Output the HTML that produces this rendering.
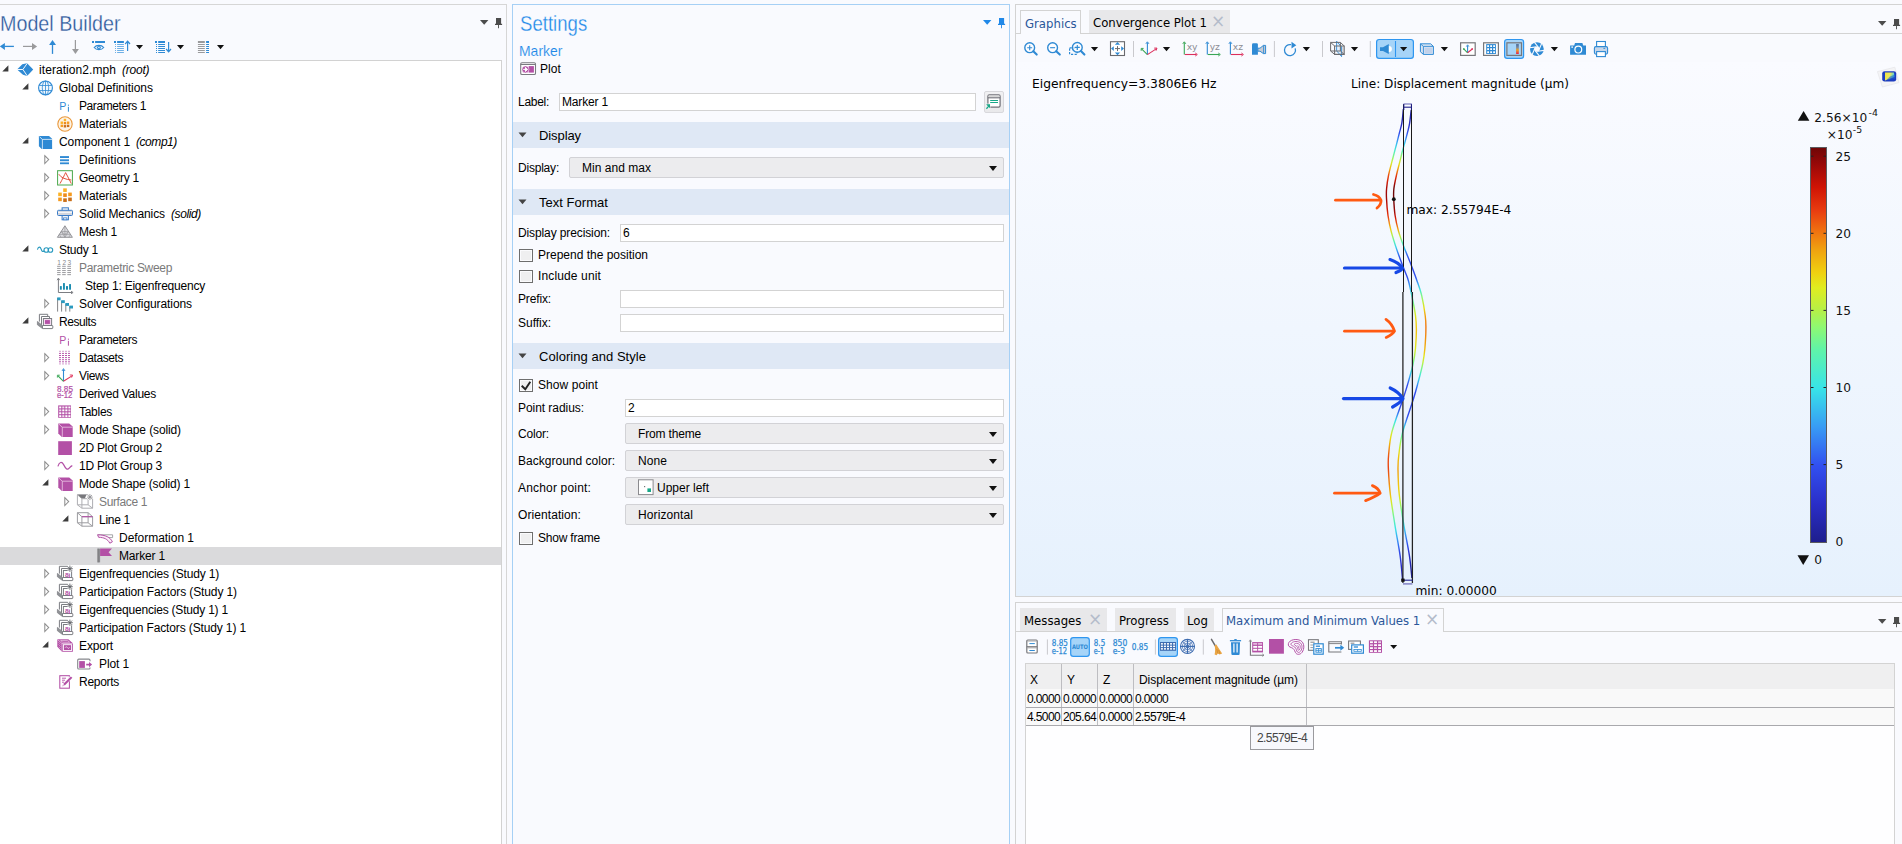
<!DOCTYPE html><html><head><meta charset="utf-8"><title>COMSOL</title><style>
html,body{margin:0;padding:0}
body{width:1902px;height:844px;overflow:hidden;background:#f9fafe;position:relative;font-family:"Liberation Sans",sans-serif;font-size:12px;color:#000}
.a{position:absolute;box-sizing:border-box}
svg.a{overflow:visible}
.t{position:absolute;white-space:pre;line-height:18px;height:18px}
.d{position:absolute;white-space:pre;font-family:"DejaVu Sans",sans-serif;line-height:16px}
.dc{position:absolute;white-space:pre;font-family:"DejaVu Sans Condensed","DejaVu Sans",sans-serif;font-size:13px;line-height:18px}
.ttl{position:absolute;white-space:pre;font-size:22.4px;line-height:24px;transform-origin:0 0;-webkit-text-stroke:0.3px #f9fafe}
.inp{position:absolute;box-sizing:border-box;background:#fff;border:1px solid #d3d3d3;line-height:16px;padding-left:2px;white-space:pre}
.cmb{position:absolute;box-sizing:border-box;background:#ececee;border:1px solid #d2d2d6;border-radius:2px;line-height:20px;white-space:pre}
.cmb:after{content:"";position:absolute;right:6px;top:8px;border-left:4px solid transparent;border-right:4px solid transparent;border-top:5px solid #111}
.sec{position:absolute;box-sizing:border-box;background:#dfe8f5;left:513px;width:496px;height:26px}
.chk{position:absolute;box-sizing:border-box;width:14px;height:13px;border:1px solid #6e6e6e;background:#efeff0;box-shadow:inset 0 0 0 1px #fbfbfd}
.sep{position:absolute;width:1px;background:#c8c8cc}
</style></head><body>
<div class="a " style="left:-1px;top:4px;width:508px;height:845px;border:1px solid #d6d6d6;border-left:none;border-bottom:none"></div>
<div class="ttl" style="left:0.2px;top:12px;color:#2b579a;transform:scaleX(0.8806)">Model Builder</div>
<svg class="a" style="left:479.8px;top:19.6px" width="9" height="6" viewBox="0 0 9 6"><path d="M0 0H8.4L4.2 4.8Z" fill="#4c4c4c"/></svg>
<svg class="a" style="left:495px;top:17.7px" width="8" height="11" viewBox="0 0 8 11"><path d="M1 0H6.1V5.7H7.1V7H4V10.3H3.1V7H0V5.7H1Z" fill="#4c4c4c"/></svg>
<svg class="a" style="left:0;top:34px" width="240" height="26" viewBox="0 34 240 26"><path d="M-0.3 46.4L4.9 43V49.9Z" fill="#2f8ad4"/><path d="M4.5 46.4H13.9" stroke="#2f8ad4" stroke-width="1.3"/><path d="M37.1 46.4L32 43V49.9Z" fill="#9a9a9c"/><path d="M23 46.4H32.5" stroke="#9a9a9c" stroke-width="1.2"/><path d="M52.5 39.9L49.1 45H56Z" fill="#2f8ad4"/><path d="M52.5 44.5V53.9" stroke="#2f8ad4" stroke-width="1.3"/><path d="M75.4 54L72 49H78.9Z" fill="#9a9a9c"/><path d="M75.4 40V49.5" stroke="#9a9a9c" stroke-width="1.2"/><rect x="92" y="41" width="2" height="2" fill="#2f8ad4"/><rect x="95.1" y="41" width="9.9" height="2" fill="#2f8ad4"/><path d="M94.2 47.5C96.4 44.6 101.4 44.6 103.7 47.5C101.4 50.4 96.4 50.4 94.2 47.5Z" fill="none" stroke="#2f8ad4" stroke-width="1.2"/><ellipse cx="98.9" cy="47.5" rx="2" ry="1.5" fill="#2f8ad4"/><rect x="98.2" y="47" width="1.4" height="0.9" fill="#fff"/><rect x="114" y="41" width="2" height="2" fill="#2f8ad4"/><rect x="117.1" y="41" width="6.8" height="2" fill="#2f8ad4"/><rect x="115" y="44.0" width="1" height="1" fill="#6fb0e6"/><rect x="117.1" y="44.0" width="6.8" height="1" fill="#6fb0e6"/><rect x="115" y="46.0" width="1" height="1" fill="#6fb0e6"/><rect x="117.1" y="46.0" width="6.8" height="1" fill="#6fb0e6"/><rect x="115" y="48.0" width="1" height="1" fill="#6fb0e6"/><rect x="117.1" y="48.0" width="6.8" height="1" fill="#6fb0e6"/><rect x="115" y="50.0" width="1" height="1" fill="#6fb0e6"/><rect x="117.1" y="50.0" width="6.8" height="1" fill="#6fb0e6"/><rect x="115" y="52.0" width="1" height="1" fill="#6fb0e6"/><rect x="117.1" y="52.0" width="6.8" height="1" fill="#6fb0e6"/><path d="M127.6 41.5V51M125.2 44L127.6 41.2L130 44" fill="none" stroke="#2f8ad4" stroke-width="1.2"/><path d="M136 45H143L139.5 49.2Z" fill="#111"/><rect x="155" y="41" width="2" height="2" fill="#2f8ad4"/><rect x="158.2" y="41" width="6.8" height="2" fill="#2f8ad4"/><rect x="156" y="44.0" width="1" height="1" fill="#2f8ad4"/><rect x="158.2" y="44.0" width="6.8" height="1" fill="#2f8ad4"/><rect x="156" y="46.0" width="1" height="1" fill="#2f8ad4"/><rect x="158.2" y="46.0" width="6.8" height="1" fill="#2f8ad4"/><rect x="156" y="48.0" width="1" height="1" fill="#2f8ad4"/><rect x="158.2" y="48.0" width="6.8" height="1" fill="#2f8ad4"/><rect x="156" y="50.0" width="1" height="1" fill="#2f8ad4"/><rect x="158.2" y="50.0" width="6.8" height="1" fill="#2f8ad4"/><rect x="156" y="52.0" width="1" height="1" fill="#2f8ad4"/><rect x="158.2" y="52.0" width="6.8" height="1" fill="#2f8ad4"/><path d="M168.6 42.1V51.4M166.2 49L168.6 51.8L171 49" fill="none" stroke="#2f8ad4" stroke-width="1.2"/><path d="M177 45H184L180.5 49.2Z" fill="#111"/><rect x="197.9" y="41" width="6.9" height="2" fill="#9a9a9c"/><rect x="206.1" y="41" width="2.9" height="2" fill="#2f8ad4"/><rect x="197.9" y="44.0" width="6.9" height="1" fill="#9a9a9c"/><rect x="206.1" y="44.0" width="2.9" height="1" fill="#2f8ad4"/><rect x="197.9" y="46.0" width="6.9" height="1" fill="#9a9a9c"/><rect x="206.1" y="46.0" width="2.9" height="1" fill="#2f8ad4"/><rect x="197.9" y="48.0" width="6.9" height="1" fill="#9a9a9c"/><rect x="206.1" y="48.0" width="2.9" height="1" fill="#2f8ad4"/><rect x="197.9" y="50.0" width="6.9" height="1" fill="#9a9a9c"/><rect x="206.1" y="50.0" width="2.9" height="1" fill="#2f8ad4"/><rect x="197.9" y="52.0" width="6.9" height="1" fill="#9a9a9c"/><rect x="206.1" y="52.0" width="2.9" height="1" fill="#2f8ad4"/><path d="M217 45H224L220.5 49.2Z" fill="#111"/></svg>
<div class="a " style="left:-1px;top:60px;width:503px;height:800px;background:#fff;border:1px solid #d2d2d2"></div>
<svg class="a" style="left:2.1px;top:65px" width="7" height="7" viewBox="0 0 7 7"><path d="M6.4 0.3V6.4H0.3Z" fill="#3c3c3c"/></svg>
<svg class="a" style="left:17px;top:61px" width="16" height="16" viewBox="0 0 16 16"><path d="M0.1 8.5L5.3 3.2L10.1 2.3L16.2 8.5L10.1 14.9L6 13.7Z" fill="#2f8ad4"/><path d="M0.1 8.5H5.9L10.2 2.4M5.9 8.5L10.2 14.8" fill="none" stroke="#fff" stroke-width="0.95"/></svg>
<div class="t" style="left:39px;top:61px;"><span style="letter-spacing:0.068px">iteration2.mph</span><i style="letter-spacing:-0.228px;margin-left:6px">(root)</i></div>
<svg class="a" style="left:22.1px;top:83px" width="7" height="7" viewBox="0 0 7 7"><path d="M6.4 0.3V6.4H0.3Z" fill="#3c3c3c"/></svg>
<svg class="a" style="left:37px;top:79px" width="16" height="16" viewBox="0 0 16 16"><circle cx="8.5" cy="8.9" r="6.9" fill="#f3f8fd" stroke="#2f8ad4" stroke-width="1.15"/><ellipse cx="8.5" cy="8.9" rx="3.2" ry="6.9" fill="none" stroke="#2f8ad4" stroke-width="0.8"/><path d="M8.5 2V15.8M2.2 6.5H14.8M2.2 11.5H14.8" stroke="#2f8ad4" stroke-width="0.8" fill="none"/></svg>
<div class="t" style="left:59px;top:79px;"><span style="letter-spacing:-0.003px">Global Definitions</span></div>
<svg class="a" style="left:57px;top:97px" width="16" height="16" viewBox="0 0 16 16"><text x="2.2" y="12.6" font-family="Liberation Sans,sans-serif" font-size="10.6" fill="#2f8ad4">P</text><rect x="10.9" y="7.6" width="1" height="1.2" fill="#2f8ad4"/><rect x="10.9" y="9.8" width="1" height="4.9" fill="#2f8ad4"/></svg>
<div class="t" style="left:79px;top:97px;"><span style="letter-spacing:-0.419px">Parameters 1</span></div>
<svg class="a" style="left:57px;top:115px" width="16" height="16" viewBox="0 0 16 16"><circle cx="8" cy="9" r="7.2" fill="#fdf3e4" stroke="#e9983c" stroke-width="1.1"/><rect x="3.60" y="6.52" width="2.4" height="2.4" fill="#fbb225"/><rect x="3.60" y="9.67" width="2.4" height="2.4" fill="#f59a1e"/><rect x="6.75" y="3.78" width="2.4" height="2.4" fill="#fbb225"/><rect x="6.75" y="6.93" width="2.4" height="2.4" fill="#ee8c1c"/><rect x="6.75" y="10.08" width="2.4" height="2.4" fill="#c96f1a"/><rect x="9.90" y="6.52" width="2.4" height="2.4" fill="#f59a1e"/><rect x="9.90" y="9.67" width="2.4" height="2.4" fill="#c96f1a"/></svg>
<div class="t" style="left:79px;top:115px;"><span style="letter-spacing:-0.076px">Materials</span></div>
<svg class="a" style="left:22.1px;top:137px" width="7" height="7" viewBox="0 0 7 7"><path d="M6.4 0.3V6.4H0.3Z" fill="#3c3c3c"/></svg>
<svg class="a" style="left:37px;top:133px" width="16" height="16" viewBox="0 0 16 16"><path d="M1.9 3H12L15.1 5.7V16H4.7L1.9 13.2Z" fill="#2f8ad4"/><path d="M2.6 3.8L5.3 6.4H15M5.4 6.4V15.9" fill="none" stroke="#e4f0fa" stroke-width="0.85"/></svg>
<div class="t" style="left:59px;top:133px;"><span style="letter-spacing:-0.095px">Component 1</span><i style="letter-spacing:-0.451px;margin-left:6px">(comp1)</i></div>
<svg class="a" style="left:43px;top:154px" width="7" height="11" viewBox="0 0 7 11"><path d="M1.8 1.7L5.7 5.6L1.8 9.5Z" fill="none" stroke="#8e8e8e" stroke-width="1.05"/></svg>
<svg class="a" style="left:57px;top:151px" width="16" height="16" viewBox="0 0 16 16"><rect x="3" y="5.1" width="9" height="1.9" fill="#2f8ad4"/><rect x="3" y="8.3" width="9" height="1.9" fill="#2f8ad4"/><rect x="3" y="11.4" width="9" height="1.8" fill="#2f8ad4"/></svg>
<div class="t" style="left:79px;top:151px;"><span style="letter-spacing:0.088px">Definitions</span></div>
<svg class="a" style="left:43px;top:172px" width="7" height="11" viewBox="0 0 7 11"><path d="M1.8 1.7L5.7 5.6L1.8 9.5Z" fill="none" stroke="#8e8e8e" stroke-width="1.05"/></svg>
<svg class="a" style="left:57px;top:169px" width="16" height="16" viewBox="0 0 16 16"><rect x="0.6" y="1.7" width="14.8" height="14.3" fill="#fff" stroke="#4aa84c" stroke-width="1"/><path d="M1.8 5.2C4 9 9 10.5 14.3 11M3 14.6C5 11 7.5 6 8.6 3.6C10.5 7 12.5 11 14.3 14.6" fill="none" stroke="#e2523c" stroke-width="1"/></svg>
<div class="t" style="left:79px;top:169px;"><span style="letter-spacing:-0.269px">Geometry 1</span></div>
<svg class="a" style="left:43px;top:190px" width="7" height="11" viewBox="0 0 7 11"><path d="M1.8 1.7L5.7 5.6L1.8 9.5Z" fill="none" stroke="#8e8e8e" stroke-width="1.05"/></svg>
<svg class="a" style="left:57px;top:187px" width="16" height="16" viewBox="0 0 16 16"><rect x="1.20" y="5.58" width="3.6" height="3.6" fill="#fbb225"/><rect x="1.20" y="10.58" width="3.6" height="3.6" fill="#f59a1e"/><rect x="6.20" y="1.35" width="3.6" height="3.6" fill="#fbb225"/><rect x="6.20" y="6.35" width="3.6" height="3.6" fill="#ee8c1c"/><rect x="6.20" y="11.35" width="3.6" height="3.6" fill="#c96f1a"/><rect x="11.20" y="5.58" width="3.6" height="3.6" fill="#f59a1e"/><rect x="11.20" y="10.58" width="3.6" height="3.6" fill="#c96f1a"/></svg>
<div class="t" style="left:79px;top:187px;"><span style="letter-spacing:-0.076px">Materials</span></div>
<svg class="a" style="left:43px;top:208px" width="7" height="11" viewBox="0 0 7 11"><path d="M1.8 1.7L5.7 5.6L1.8 9.5Z" fill="none" stroke="#8e8e8e" stroke-width="1.05"/></svg>
<svg class="a" style="left:57px;top:205px" width="16" height="16" viewBox="0 0 16 16"><rect x="5.1" y="2.8" width="6.3" height="12" fill="#eef2f8" stroke="#3a7cc8" stroke-width="1"/><rect x="0.5" y="5.3" width="15" height="5.2" rx="1" fill="#d2d6de" stroke="#3a7cc8" stroke-width="1"/><path d="M1 7.4H15" stroke="#f4f5f8" stroke-width="1.2"/><rect x="6.6" y="12.9" width="3.3" height="1.9" fill="#fff" stroke="#3a7cc8" stroke-width="0.8"/></svg>
<div class="t" style="left:79px;top:205px;"><span style="letter-spacing:-0.092px">Solid Mechanics</span><i style="letter-spacing:-0.403px;margin-left:6px">(solid)</i></div>
<svg class="a" style="left:57px;top:223px" width="16" height="16" viewBox="0 0 16 16"><path d="M7.9 2.8L15.4 14.3H0.4Z" fill="#dcdce0" stroke="#8a8a8e" stroke-width="0.9"/><path d="M4.2 8.5H11.6L7.9 14.3ZM4.2 8.5L7.9 11.4L11.6 8.5M7.9 2.8V14.3M2.3 11.4H13.5M2.3 11.4L4 14.3M13.5 11.4L11.8 14.3" fill="none" stroke="#909094" stroke-width="0.6"/></svg>
<div class="t" style="left:79px;top:223px;"><span style="letter-spacing:-0.225px">Mesh 1</span></div>
<svg class="a" style="left:22.1px;top:245px" width="7" height="7" viewBox="0 0 7 7"><path d="M6.4 0.3V6.4H0.3Z" fill="#3c3c3c"/></svg>
<svg class="a" style="left:37px;top:241px" width="16" height="16" viewBox="0 0 16 16"><path d="M0.4 8.6C1.4 5.4 3.2 5.4 4.2 8.2C5 10.6 6 11.2 7 9.6" fill="none" stroke="#2a9abf" stroke-width="1.1"/><circle cx="9.3" cy="9" r="2.3" fill="none" stroke="#2a9abf" stroke-width="1.1"/><circle cx="13.4" cy="9" r="2.3" fill="none" stroke="#2a9abf" stroke-width="1.1"/></svg>
<div class="t" style="left:59px;top:241px;"><span style="letter-spacing:-0.242px">Study 1</span></div>
<svg class="a" style="left:57px;top:259px" width="16" height="16" viewBox="0 0 16 16"><text x="0.3" y="5.8" font-family="Liberation Sans,sans-serif" font-size="6.5" fill="#86868a" letter-spacing="1.5">123</text><rect x="0.1" y="6.8" width="3.5" height="1.05" fill="#a0a0a4"/><rect x="0.1" y="8.9" width="3.5" height="1.05" fill="#a0a0a4"/><rect x="0.1" y="11" width="3.5" height="1.05" fill="#a0a0a4"/><rect x="0.1" y="13" width="3.5" height="1.05" fill="#a0a0a4"/><rect x="0.1" y="15.1" width="3.5" height="1.05" fill="#a0a0a4"/><rect x="5.15" y="6.8" width="3.6" height="1.05" fill="#a0a0a4"/><rect x="5.15" y="8.9" width="3.6" height="1.05" fill="#a0a0a4"/><rect x="5.15" y="11" width="3.6" height="1.05" fill="#a0a0a4"/><rect x="5.15" y="13" width="3.6" height="1.05" fill="#a0a0a4"/><rect x="5.15" y="15.1" width="3.6" height="1.05" fill="#a0a0a4"/><rect x="10.3" y="6.8" width="3.7" height="1.05" fill="#a0a0a4"/><rect x="10.3" y="8.9" width="3.7" height="1.05" fill="#a0a0a4"/><rect x="10.3" y="11" width="3.7" height="1.05" fill="#a0a0a4"/><rect x="10.3" y="13" width="3.7" height="1.05" fill="#a0a0a4"/><rect x="10.3" y="15.1" width="3.7" height="1.05" fill="#a0a0a4"/></svg>
<div class="t" style="left:79px;top:259px;color:#7a7a7a;"><span style="letter-spacing:-0.315px">Parametric Sweep</span></div>
<svg class="a" style="left:57px;top:277px" width="16" height="16" viewBox="0 0 16 16"><path d="M1.4 1.8V15.5H15.4" fill="none" stroke="#7b7d82" stroke-width="1"/><path d="M0.1 3.2L1.4 1.1L2.7 3.2M14 14.2L16.1 15.5L14 16.8" fill="none" stroke="#7b7d82" stroke-width="0.9"/><rect x="2.9" y="9.1" width="1.9" height="3.6" fill="#1a8cb0"/><rect x="6" y="6.1" width="1.9" height="6.6" fill="#1a8cb0"/><rect x="9" y="9.1" width="2" height="3.6" fill="#1a8cb0"/><rect x="12.1" y="7.1" width="1.9" height="5.6" fill="#1a8cb0"/></svg>
<div class="t" style="left:85px;top:277px;"><span style="letter-spacing:-0.216px">Step 1: Eigenfrequency</span></div>
<svg class="a" style="left:43px;top:298px" width="7" height="11" viewBox="0 0 7 11"><path d="M1.8 1.7L5.7 5.6L1.8 9.5Z" fill="none" stroke="#8e8e8e" stroke-width="1.05"/></svg>
<svg class="a" style="left:57px;top:295px" width="16" height="16" viewBox="0 0 16 16"><path d="M0.6 3V16.6M4.6 6V16.6M8.8 8.8V16.6M12.8 11.2V16.6" stroke="#77777b" stroke-width="0.9" fill="none"/><rect x="0.2" y="2.4" width="3.4" height="2.9" fill="#2a9abf"/><rect x="4.2" y="5.2" width="3.6" height="2.9" fill="#2a9abf"/><rect x="8.4" y="8" width="3.6" height="2.9" fill="#2a9abf"/><rect x="12.4" y="10.6" width="3.6" height="2.9" fill="#2a9abf"/></svg>
<div class="t" style="left:79px;top:295px;"><span style="letter-spacing:-0.082px">Solver Configurations</span></div>
<svg class="a" style="left:22.1px;top:317px" width="7" height="7" viewBox="0 0 7 7"><path d="M6.4 0.3V6.4H0.3Z" fill="#3c3c3c"/></svg>
<svg class="a" style="left:37px;top:313px" width="16" height="16" viewBox="0 0 16 16"><path d="M2.4 8.6V1.3H10.7V3.3" fill="#fff" stroke="#7b7d82" stroke-width="1"/><path d="M4.5 11.8V3.5H12.5V5.4" fill="#fff" stroke="#7b7d82" stroke-width="1"/><path d="M0.4 8.4L5.5 12.5V15.6L0.4 11.8Z" fill="#909296" stroke="#7b7d82" stroke-width="0.7"/><rect x="5.5" y="12.5" width="10.3" height="3.1" rx="0.6" fill="#fff" stroke="#7b7d82" stroke-width="1"/><rect x="6.4" y="5.5" width="8.2" height="7" fill="#fff" stroke="#7b7d82" stroke-width="1"/><rect x="7.2" y="6.3" width="6.6" height="5.5" fill="#efcdea"/><rect x="8" y="7.1" width="4.9" height="3.8" fill="#b350a6"/></svg>
<div class="t" style="left:59px;top:313px;"><span style="letter-spacing:-0.431px">Results</span></div>
<svg class="a" style="left:57px;top:331px" width="16" height="16" viewBox="0 0 16 16"><text x="2.2" y="12.6" font-family="Liberation Sans,sans-serif" font-size="10.6" fill="#b350a6">P</text><rect x="10.9" y="7.6" width="1" height="1.2" fill="#b350a6"/><rect x="10.9" y="9.8" width="1" height="4.9" fill="#b350a6"/></svg>
<div class="t" style="left:79px;top:331px;"><span style="letter-spacing:-0.402px">Parameters</span></div>
<svg class="a" style="left:43px;top:352px" width="7" height="11" viewBox="0 0 7 11"><path d="M1.8 1.7L5.7 5.6L1.8 9.5Z" fill="none" stroke="#8e8e8e" stroke-width="1.05"/></svg>
<svg class="a" style="left:57px;top:349px" width="16" height="16" viewBox="0 0 16 16"><rect x="2.0" y="1.8" width="2" height="1" fill="#b350a6" opacity="0.55"/><rect x="2.0" y="3.9" width="2" height="1" fill="#b350a6" opacity="0.95"/><rect x="2.0" y="6.0" width="2" height="1" fill="#b350a6" opacity="0.95"/><rect x="2.0" y="8.1" width="2" height="1" fill="#b350a6" opacity="0.95"/><rect x="2.0" y="10.2" width="2" height="1" fill="#b350a6" opacity="0.95"/><rect x="2.0" y="12.3" width="2" height="1" fill="#b350a6" opacity="0.95"/><rect x="2.0" y="14.4" width="2" height="1" fill="#b350a6" opacity="0.55"/><rect x="5.0" y="1.8" width="2" height="1" fill="#b350a6" opacity="0.55"/><rect x="5.0" y="3.9" width="2" height="1" fill="#b350a6" opacity="0.95"/><rect x="5.0" y="6.0" width="2" height="1" fill="#b350a6" opacity="0.95"/><rect x="5.0" y="8.1" width="2" height="1" fill="#b350a6" opacity="0.95"/><rect x="5.0" y="10.2" width="2" height="1" fill="#b350a6" opacity="0.95"/><rect x="5.0" y="12.3" width="2" height="1" fill="#b350a6" opacity="0.95"/><rect x="5.0" y="14.4" width="2" height="1" fill="#b350a6" opacity="0.55"/><rect x="8.0" y="1.8" width="2" height="1" fill="#b350a6" opacity="0.55"/><rect x="8.0" y="3.9" width="2" height="1" fill="#b350a6" opacity="0.95"/><rect x="8.0" y="6.0" width="2" height="1" fill="#b350a6" opacity="0.95"/><rect x="8.0" y="8.1" width="2" height="1" fill="#b350a6" opacity="0.95"/><rect x="8.0" y="10.2" width="2" height="1" fill="#b350a6" opacity="0.95"/><rect x="8.0" y="12.3" width="2" height="1" fill="#b350a6" opacity="0.95"/><rect x="8.0" y="14.4" width="2" height="1" fill="#b350a6" opacity="0.55"/><rect x="11.0" y="1.8" width="2" height="1" fill="#b350a6" opacity="0.55"/><rect x="11.0" y="3.9" width="2" height="1" fill="#b350a6" opacity="0.95"/><rect x="11.0" y="6.0" width="2" height="1" fill="#b350a6" opacity="0.95"/><rect x="11.0" y="8.1" width="2" height="1" fill="#b350a6" opacity="0.95"/><rect x="11.0" y="10.2" width="2" height="1" fill="#b350a6" opacity="0.95"/><rect x="11.0" y="12.3" width="2" height="1" fill="#b350a6" opacity="0.95"/><rect x="11.0" y="14.4" width="2" height="1" fill="#b350a6" opacity="0.55"/></svg>
<div class="t" style="left:79px;top:349px;"><span style="letter-spacing:-0.419px">Datasets</span></div>
<svg class="a" style="left:43px;top:370px" width="7" height="11" viewBox="0 0 7 11"><path d="M1.8 1.7L5.7 5.6L1.8 9.5Z" fill="none" stroke="#8e8e8e" stroke-width="1.05"/></svg>
<svg class="a" style="left:57px;top:367px" width="16" height="16" viewBox="0 0 16 16"><path d="M6.5 14.3V2.4" stroke="#2f8ad4" stroke-width="1.1"/><path d="M5 4L6.5 1.6L8 4" fill="none" stroke="#2f8ad4" stroke-width="0.9"/><path d="M6.5 14.3L0.8 8.6" stroke="#3aa655" stroke-width="1.1"/><path d="M0.4 10.6V8.2H2.8" fill="none" stroke="#3aa655" stroke-width="0.9"/><path d="M6.5 14.3L15.4 8.6" stroke="#e0345c" stroke-width="1.1"/><path d="M12.8 8H15.6L14.6 10.6" fill="none" stroke="#e0345c" stroke-width="0.9"/></svg>
<div class="t" style="left:79px;top:367px;"><span style="letter-spacing:-0.359px">Views</span></div>
<svg class="a" style="left:57px;top:385px" width="16" height="16" viewBox="0 0 16 16"><text x="0" y="6.6" font-family="Liberation Sans,sans-serif" font-size="8.2" fill="#b350a6" stroke="#b350a6" stroke-width="0.2" textLength="16" lengthAdjust="spacingAndGlyphs">8.85</text><text x="0" y="12.9" font-family="Liberation Sans,sans-serif" font-size="8.2" fill="#b350a6" stroke="#b350a6" stroke-width="0.2" textLength="15.4" lengthAdjust="spacingAndGlyphs">e-12</text></svg>
<div class="t" style="left:79px;top:385px;"><span style="letter-spacing:-0.249px">Derived Values</span></div>
<svg class="a" style="left:43px;top:406px" width="7" height="11" viewBox="0 0 7 11"><path d="M1.8 1.7L5.7 5.6L1.8 9.5Z" fill="none" stroke="#8e8e8e" stroke-width="1.05"/></svg>
<svg class="a" style="left:57px;top:403px" width="16" height="16" viewBox="0 0 16 16"><rect x="1.2" y="2.4" width="12.8" height="12.4" fill="#b350a6"/><rect x="2.20" y="3.50" width="2.1" height="1.9" fill="#fff"/><rect x="2.20" y="6.40" width="2.1" height="1.9" fill="#f3dff0"/><rect x="2.20" y="9.30" width="2.1" height="1.9" fill="#fff"/><rect x="2.20" y="12.20" width="2.1" height="1.9" fill="#fff"/><rect x="5.25" y="3.50" width="2.1" height="1.9" fill="#f3dff0"/><rect x="5.25" y="6.40" width="2.1" height="1.9" fill="#fff"/><rect x="5.25" y="9.30" width="2.1" height="1.9" fill="#fff"/><rect x="5.25" y="12.20" width="2.1" height="1.9" fill="#f3dff0"/><rect x="8.30" y="3.50" width="2.1" height="1.9" fill="#fff"/><rect x="8.30" y="6.40" width="2.1" height="1.9" fill="#fff"/><rect x="8.30" y="9.30" width="2.1" height="1.9" fill="#f3dff0"/><rect x="8.30" y="12.20" width="2.1" height="1.9" fill="#fff"/><rect x="11.35" y="3.50" width="2.1" height="1.9" fill="#fff"/><rect x="11.35" y="6.40" width="2.1" height="1.9" fill="#f3dff0"/><rect x="11.35" y="9.30" width="2.1" height="1.9" fill="#fff"/><rect x="11.35" y="12.20" width="2.1" height="1.9" fill="#fff"/></svg>
<div class="t" style="left:79px;top:403px;"><span style="letter-spacing:-0.281px">Tables</span></div>
<svg class="a" style="left:43px;top:424px" width="7" height="11" viewBox="0 0 7 11"><path d="M1.8 1.7L5.7 5.6L1.8 9.5Z" fill="none" stroke="#8e8e8e" stroke-width="1.05"/></svg>
<svg class="a" style="left:57px;top:421px" width="16" height="16" viewBox="0 0 16 16"><path d="M1.3 2.4H12.2L15.7 5.4V16H4.8L1.3 12.6Z" fill="#b350a6"/><path d="M2 3.2L5.2 6.2H15.6M5.3 6.2V15.9" fill="none" stroke="#ecc9e6" stroke-width="0.8"/></svg>
<div class="t" style="left:79px;top:421px;"><span style="letter-spacing:-0.114px">Mode Shape (solid)</span></div>
<svg class="a" style="left:57px;top:439px" width="16" height="16" viewBox="0 0 16 16"><rect x="1.2" y="2.2" width="13.7" height="13.8" fill="#b350a6"/></svg>
<div class="t" style="left:79px;top:439px;"><span style="letter-spacing:-0.203px">2D Plot Group 2</span></div>
<svg class="a" style="left:43px;top:460px" width="7" height="11" viewBox="0 0 7 11"><path d="M1.8 1.7L5.7 5.6L1.8 9.5Z" fill="none" stroke="#8e8e8e" stroke-width="1.05"/></svg>
<svg class="a" style="left:57px;top:457px" width="16" height="16" viewBox="0 0 16 16"><path d="M0.9 9.4C2.4 4.6 4.8 4.4 6.6 7.6C8.6 11.4 10.2 13.6 12.2 11.2C13.4 9.8 14.4 8.8 15.3 8.6" fill="none" stroke="#b350a6" stroke-width="1.2"/></svg>
<div class="t" style="left:79px;top:457px;"><span style="letter-spacing:-0.203px">1D Plot Group 3</span></div>
<svg class="a" style="left:42.1px;top:479px" width="7" height="7" viewBox="0 0 7 7"><path d="M6.4 0.3V6.4H0.3Z" fill="#3c3c3c"/></svg>
<svg class="a" style="left:57px;top:475px" width="16" height="16" viewBox="0 0 16 16"><path d="M1.3 2.4H12.2L15.7 5.4V16H4.8L1.3 12.6Z" fill="#b350a6"/><path d="M2 3.2L5.2 6.2H15.6M5.3 6.2V15.9" fill="none" stroke="#ecc9e6" stroke-width="0.8"/></svg>
<div class="t" style="left:79px;top:475px;"><span style="letter-spacing:-0.153px">Mode Shape (solid) 1</span></div>
<svg class="a" style="left:63px;top:496px" width="7" height="11" viewBox="0 0 7 11"><path d="M1.8 1.7L5.7 5.6L1.8 9.5Z" fill="none" stroke="#8e8e8e" stroke-width="1.05"/></svg>
<svg class="a" style="left:77px;top:493px" width="16" height="16" viewBox="0 0 16 16"><path d="M0.4 1.7H11.1V11.8H0.4ZM4.9 5.7H15.6V15.2H4.9ZM0.4 1.7L4.9 5.7M11.1 1.7L15.6 5.7M0.4 11.8L4.9 15.2M11.1 11.8L15.6 15.2" fill="none" stroke="#aeaeb2" stroke-width="1"/><path d="M0.9 1.7H9.4L8 5.2H4.6Z" fill="#77777b"/><circle cx="12.9" cy="4.1" r="3" fill="#fff"/><path d="M12.9 1.1V7.1M10.1 4.1H15.7M10.9 2.1L14.9 6.1M14.9 2.1L10.9 6.1" stroke="#8e8e92" stroke-width="0.85"/></svg>
<div class="t" style="left:99px;top:493px;color:#7a7a7a;"><span style="letter-spacing:-0.374px">Surface 1</span></div>
<svg class="a" style="left:62.1px;top:515px" width="7" height="7" viewBox="0 0 7 7"><path d="M6.4 0.3V6.4H0.3Z" fill="#3c3c3c"/></svg>
<svg class="a" style="left:77px;top:511px" width="16" height="16" viewBox="0 0 16 16"><path d="M0.4 1.7H11.1V11.8H0.4ZM4.9 5.7H15.6V15.2H4.9ZM0.4 1.7L4.9 5.7M11.1 1.7L15.6 5.7M0.4 11.8L4.9 15.2M11.1 11.8L15.6 15.2" fill="none" stroke="#9c9ca0" stroke-width="1"/><path d="M4.9 5.7H15.6" stroke="#b350a6" stroke-width="1.1"/></svg>
<div class="t" style="left:99px;top:511px;"><span style="letter-spacing:-0.283px">Line 1</span></div>
<svg class="a" style="left:97px;top:529px" width="16" height="16" viewBox="0 0 16 16"><path d="M0.6 5.8H15.6V8.6H8.2" fill="none" stroke="#9a9a9e" stroke-width="0.9"/><path d="M0.6 5.8L1.6 8.3C7 8.4 10.6 10 12.8 14.2L15.4 12.8C13.2 8.2 8.6 5.9 0.6 5.8Z" fill="#fbeef9" stroke="#b350a6" stroke-width="1"/></svg>
<div class="t" style="left:119px;top:529px;"><span style="letter-spacing:-0.028px">Deformation 1</span></div>
<div class="a " style="left:0px;top:547px;width:501px;height:18px;background:#dadadc"></div>
<svg class="a" style="left:97px;top:547px" width="16" height="16" viewBox="0 0 16 16"><rect x="0.6" y="1.6" width="2.5" height="13.8" fill="#8c8c90"/><rect x="0.6" y="1.6" width="0.8" height="13.8" fill="#737377"/><path d="M3.1 1.4H15L11.6 5.2L15 9H3.1Z" fill="#b350a6"/></svg>
<div class="t" style="left:119px;top:547px;"><span style="letter-spacing:-0.168px">Marker 1</span></div>
<svg class="a" style="left:43px;top:568px" width="7" height="11" viewBox="0 0 7 11"><path d="M1.8 1.7L5.7 5.6L1.8 9.5Z" fill="none" stroke="#8e8e8e" stroke-width="1.05"/></svg>
<svg class="a" style="left:57px;top:565px" width="16" height="16" viewBox="0 0 16 16"><path d="M2.4 8.6V1.3H10.7V3.3" fill="#fff" stroke="#7b7d82" stroke-width="1"/><path d="M4.5 11.8V3.5H12.5V5.4" fill="#fff" stroke="#7b7d82" stroke-width="1"/><path d="M0.4 8.4L5.5 12.5V15.6L0.4 11.8Z" fill="#909296" stroke="#7b7d82" stroke-width="0.7"/><rect x="5.5" y="12.5" width="10.3" height="3.1" rx="0.6" fill="#fff" stroke="#7b7d82" stroke-width="1"/><rect x="6.4" y="5.5" width="8.2" height="7" fill="#fff" stroke="#7b7d82" stroke-width="1"/><text x="7.9" y="11.5" font-family="Liberation Sans,sans-serif" font-size="5.8" font-weight="bold" fill="#b350a6" textLength="5.6" lengthAdjust="spacingAndGlyphs">8j</text><circle cx="12.9" cy="3.7" r="2.9" fill="#fff"/><path d="M12.9 0.6V6.8M10 3.7H15.8M10.8 1.6L15 5.8M15 1.6L10.8 5.8" stroke="#5f6166" stroke-width="0.9"/></svg>
<div class="t" style="left:79px;top:565px;"><span style="letter-spacing:-0.183px">Eigenfrequencies (Study 1)</span></div>
<svg class="a" style="left:43px;top:586px" width="7" height="11" viewBox="0 0 7 11"><path d="M1.8 1.7L5.7 5.6L1.8 9.5Z" fill="none" stroke="#8e8e8e" stroke-width="1.05"/></svg>
<svg class="a" style="left:57px;top:583px" width="16" height="16" viewBox="0 0 16 16"><path d="M2.4 8.6V1.3H10.7V3.3" fill="#fff" stroke="#7b7d82" stroke-width="1"/><path d="M4.5 11.8V3.5H12.5V5.4" fill="#fff" stroke="#7b7d82" stroke-width="1"/><path d="M0.4 8.4L5.5 12.5V15.6L0.4 11.8Z" fill="#909296" stroke="#7b7d82" stroke-width="0.7"/><rect x="5.5" y="12.5" width="10.3" height="3.1" rx="0.6" fill="#fff" stroke="#7b7d82" stroke-width="1"/><rect x="6.4" y="5.5" width="8.2" height="7" fill="#fff" stroke="#7b7d82" stroke-width="1"/><text x="7.9" y="11.5" font-family="Liberation Sans,sans-serif" font-size="5.8" font-weight="bold" fill="#b350a6" textLength="5.6" lengthAdjust="spacingAndGlyphs">8j</text><circle cx="12.9" cy="3.7" r="2.9" fill="#fff"/><path d="M12.9 0.6V6.8M10 3.7H15.8M10.8 1.6L15 5.8M15 1.6L10.8 5.8" stroke="#5f6166" stroke-width="0.9"/></svg>
<div class="t" style="left:79px;top:583px;"><span style="letter-spacing:-0.110px">Participation Factors (Study 1)</span></div>
<svg class="a" style="left:43px;top:604px" width="7" height="11" viewBox="0 0 7 11"><path d="M1.8 1.7L5.7 5.6L1.8 9.5Z" fill="none" stroke="#8e8e8e" stroke-width="1.05"/></svg>
<svg class="a" style="left:57px;top:601px" width="16" height="16" viewBox="0 0 16 16"><path d="M2.4 8.6V1.3H10.7V3.3" fill="#fff" stroke="#7b7d82" stroke-width="1"/><path d="M4.5 11.8V3.5H12.5V5.4" fill="#fff" stroke="#7b7d82" stroke-width="1"/><path d="M0.4 8.4L5.5 12.5V15.6L0.4 11.8Z" fill="#909296" stroke="#7b7d82" stroke-width="0.7"/><rect x="5.5" y="12.5" width="10.3" height="3.1" rx="0.6" fill="#fff" stroke="#7b7d82" stroke-width="1"/><rect x="6.4" y="5.5" width="8.2" height="7" fill="#fff" stroke="#7b7d82" stroke-width="1"/><text x="7.9" y="11.5" font-family="Liberation Sans,sans-serif" font-size="5.8" font-weight="bold" fill="#b350a6" textLength="5.6" lengthAdjust="spacingAndGlyphs">8j</text><circle cx="12.9" cy="3.7" r="2.9" fill="#fff"/><path d="M12.9 0.6V6.8M10 3.7H15.8M10.8 1.6L15 5.8M15 1.6L10.8 5.8" stroke="#5f6166" stroke-width="0.9"/></svg>
<div class="t" style="left:79px;top:601px;"><span style="letter-spacing:-0.206px">Eigenfrequencies (Study 1) 1</span></div>
<svg class="a" style="left:43px;top:622px" width="7" height="11" viewBox="0 0 7 11"><path d="M1.8 1.7L5.7 5.6L1.8 9.5Z" fill="none" stroke="#8e8e8e" stroke-width="1.05"/></svg>
<svg class="a" style="left:57px;top:619px" width="16" height="16" viewBox="0 0 16 16"><path d="M2.4 8.6V1.3H10.7V3.3" fill="#fff" stroke="#7b7d82" stroke-width="1"/><path d="M4.5 11.8V3.5H12.5V5.4" fill="#fff" stroke="#7b7d82" stroke-width="1"/><path d="M0.4 8.4L5.5 12.5V15.6L0.4 11.8Z" fill="#909296" stroke="#7b7d82" stroke-width="0.7"/><rect x="5.5" y="12.5" width="10.3" height="3.1" rx="0.6" fill="#fff" stroke="#7b7d82" stroke-width="1"/><rect x="6.4" y="5.5" width="8.2" height="7" fill="#fff" stroke="#7b7d82" stroke-width="1"/><text x="7.9" y="11.5" font-family="Liberation Sans,sans-serif" font-size="5.8" font-weight="bold" fill="#b350a6" textLength="5.6" lengthAdjust="spacingAndGlyphs">8j</text><circle cx="12.9" cy="3.7" r="2.9" fill="#fff"/><path d="M12.9 0.6V6.8M10 3.7H15.8M10.8 1.6L15 5.8M15 1.6L10.8 5.8" stroke="#5f6166" stroke-width="0.9"/></svg>
<div class="t" style="left:79px;top:619px;"><span style="letter-spacing:-0.133px">Participation Factors (Study 1) 1</span></div>
<svg class="a" style="left:42.1px;top:641px" width="7" height="7" viewBox="0 0 7 7"><path d="M6.4 0.3V6.4H0.3Z" fill="#3c3c3c"/></svg>
<svg class="a" style="left:57px;top:637px" width="16" height="16" viewBox="0 0 16 16"><path d="M0.3 2.3H11.3L15.9 6.3V14.7H5L0.3 9.7Z" fill="#b350a6"/><path d="M0.6 2.6L5 6.5H15.7M5 6.5V14.5" fill="none" stroke="#f0d2ec" stroke-width="0.7"/><path d="M3.6 3.4H10.6L12.6 5.2H5.8Z" fill="none" stroke="#f0d2ec" stroke-width="0.7"/><path d="M1.4 5.2L3.8 7.6M1.4 7.4L3.8 9.8M1.8 9.8L3.8 11.8" stroke="#e2b4dc" stroke-width="0.6"/><rect x="6.4" y="7.7" width="8.2" height="5.8" fill="none" stroke="#fff" stroke-width="0.9"/><path d="M8.2 10.6C8.8 9.4 9.8 9.6 10.4 10.6C11 11.6 12 11.6 12.6 10.4" fill="none" stroke="#f6e2f3" stroke-width="0.8"/></svg>
<div class="t" style="left:79px;top:637px;"><span style="letter-spacing:-0.114px">Export</span></div>
<svg class="a" style="left:77px;top:655px" width="16" height="16" viewBox="0 0 16 16"><path d="M13 6.2V5.2Q13 4.1 11.9 4.1H1.8Q0.7 4.1 0.7 5.2V12.9Q0.7 14 1.8 14H11.9Q13 14 13 12.9V12.4" fill="#fff" stroke="#85878c" stroke-width="1.1"/><rect x="2.2" y="6.1" width="5.7" height="6.8" fill="#b350a6"/><path d="M9.2 9.6H13.4" stroke="#b350a6" stroke-width="1.7"/><path d="M12 6.9L15.1 9.6L12 12.3Z" fill="#b350a6"/></svg>
<div class="t" style="left:99px;top:655px;"><span style="letter-spacing:-0.114px">Plot 1</span></div>
<svg class="a" style="left:57px;top:673px" width="16" height="16" viewBox="0 0 16 16"><rect x="2.8" y="2.7" width="9.6" height="12.5" fill="#fff" stroke="#b350a6" stroke-width="1.05"/><path d="M5 5.2H9M5 7.2H8M5 9.2H7" stroke="#b350a6" stroke-width="0.9"/><path d="M13.6 2.6L16 4.6L8 13L4.6 14.2L5.6 11Z" fill="#fff"/><path d="M13.8 3.4L15.4 4.8L7.8 12.4L6.2 11Z" fill="#b350a6"/><path d="M5.9 11.4L7.4 12.8L5 13.6Z" fill="#d9a3d2"/></svg>
<div class="t" style="left:79px;top:673px;"><span style="letter-spacing:-0.288px">Reports</span></div>
<div class="a " style="left:512px;top:4px;width:498px;height:845px;border:1px solid #a6d0f5;border-bottom:none"></div>
<div class="ttl" style="left:520px;top:12px;color:#2088e8;transform:scaleX(0.8303)">Settings</div>
<svg class="a" style="left:983.2px;top:19.7px" width="9" height="6" viewBox="0 0 9 6"><path d="M0 0H8.4L4.2 4.8Z" fill="#2088e8"/></svg>
<svg class="a" style="left:997.8px;top:17.8px" width="8" height="11" viewBox="0 0 8 11"><path d="M1 0H6.1V5.7H7.1V7H4V10.3H3.1V7H0V5.7H1Z" fill="#2088e8"/></svg>
<div class="t" style="left:519.4px;top:42px;color:#2088e8;font-size:15px;line-height:18px;transform-origin:0 0;transform:scaleX(0.9299);-webkit-text-stroke:0.15px #f9fafe;letter-spacing:0">Marker</div>
<svg class="a" style="left:518px;top:60px" width="20" height="17" viewBox="518 60 20 17"><rect x="520.7" y="62.7" width="14.8" height="11.8" rx="1.3" fill="#fff" stroke="#7a7a80" stroke-width="1.1"/><path d="M520.7 64.5H535.5" stroke="#7a7a80" stroke-width="1"/><rect x="528.6" y="66.1" width="5.3" height="6.5" fill="#b350a6"/><circle cx="525.5" cy="69.4" r="3.5" fill="#b350a6" stroke="#fff" stroke-width="0.5"/><path d="M523.2 69.4H526M525.4 67.4L527.6 69.4L525.4 71.4Z" fill="#fff" stroke="#fff" stroke-width="1"/></svg>
<div class="t" style="left:540px;top:60px;letter-spacing:0.081px;">Plot</div>
<div class="t" style="left:518px;top:93px;letter-spacing:-0.283px;">Label:</div>
<div class="inp" style="left:559px;top:93px;width:417px;height:18px;letter-spacing:-0.168px">Marker 1</div>
<div class="a " style="left:984px;top:91px;width:20px;height:22px;border:1px solid #d8d8dc;background:linear-gradient(#f1f1f3,#e9e9eb);border-radius:2px"></div>
<svg class="a" style="left:985px;top:92px" width="18" height="20" viewBox="985 92 18 20"><rect x="987.9" y="94.8" width="12.2" height="12.4" rx="1.4" fill="#fff" stroke="#707078" stroke-width="1.2"/><rect x="988.5" y="95.4" width="11" height="2" fill="#d6d6d6"/><path d="M987.9 97.8H1000.1" stroke="#707078" stroke-width="1.1"/><path d="M990.2 100.5H998M990.2 102.5H998" stroke="#18a888" stroke-width="1"/><rect x="985.6" y="103.6" width="4.8" height="6" fill="#efeff1"/><path d="M986.2 104.3H990V108.3L988.8 107L986.9 109.3L985.9 108.3L987.9 106.2L986.2 104.3Z" fill="#18a888"/></svg>
<div class="sec" style="top:122px"></div>
<svg class="a" style="left:518px;top:132px" width="9" height="6" viewBox="0 0 9 6"><path d="M0.5 0.5H8.5L4.5 5.2Z" fill="#444"/></svg>
<div class="t" style="left:539px;top:127px;letter-spacing:-0.089px;font-size:13px">Display</div>
<div class="t" style="left:518px;top:159px;letter-spacing:-0.210px;">Display:</div>
<div class="cmb" style="left:569px;top:157px;width:435px;height:21px;padding-left:12px;letter-spacing:0.028px">Min and max</div>
<div class="sec" style="top:189px"></div>
<svg class="a" style="left:518px;top:199px" width="9" height="6" viewBox="0 0 9 6"><path d="M0.5 0.5H8.5L4.5 5.2Z" fill="#444"/></svg>
<div class="t" style="left:539px;top:194px;letter-spacing:0.034px;font-size:13px">Text Format</div>
<div class="t" style="left:518px;top:224px;letter-spacing:-0.113px;">Display precision:</div>
<div class="inp" style="left:620px;top:224px;width:384px;height:18px">6</div>
<div class="chk" style="left:519px;top:249px"></div>
<div class="t" style="left:538px;top:246px;letter-spacing:-0.004px;">Prepend the position</div>
<div class="chk" style="left:519px;top:270px"></div>
<div class="t" style="left:538px;top:267px;letter-spacing:0.135px;">Include unit</div>
<div class="t" style="left:518px;top:290px;letter-spacing:-0.144px;">Prefix:</div>
<div class="inp" style="left:620px;top:290px;width:384px;height:18px"></div>
<div class="t" style="left:518px;top:314px;letter-spacing:-0.018px;">Suffix:</div>
<div class="inp" style="left:620px;top:314px;width:384px;height:18px"></div>
<div class="sec" style="top:343px"></div>
<svg class="a" style="left:518px;top:353px" width="9" height="6" viewBox="0 0 9 6"><path d="M0.5 0.5H8.5L4.5 5.2Z" fill="#444"/></svg>
<div class="t" style="left:539px;top:348px;letter-spacing:0.043px;font-size:13px">Coloring and Style</div>
<div class="chk" style="left:519px;top:379px"><svg width="12" height="11" viewBox="0 0 12 11" style="position:absolute;left:0;top:0"><path d="M1.7 5.7L5.3 9.2L10.3 1.7" fill="none" stroke="#222" stroke-width="1.9"/></svg></div>
<div class="t" style="left:538px;top:376px;letter-spacing:0.063px;">Show point</div>
<div class="t" style="left:518px;top:399px;letter-spacing:-0.054px;">Point radius:</div>
<div class="inp" style="left:625px;top:399px;width:379px;height:18px">2</div>
<div class="t" style="left:518px;top:425px;letter-spacing:-0.168px;">Color:</div>
<div class="cmb" style="left:625px;top:423px;width:379px;height:21px;padding-left:12px;letter-spacing:-0.168px">From theme</div>
<div class="t" style="left:518px;top:452px;letter-spacing:0.016px;">Background color:</div>
<div class="cmb" style="left:625px;top:450px;width:379px;height:21px;padding-left:12px;letter-spacing:0.078px">None</div>
<div class="t" style="left:518px;top:479px;letter-spacing:0.176px;">Anchor point:</div>
<div class="cmb" style="left:625px;top:477px;width:379px;height:21px;padding-left:31px;letter-spacing:-0.003px">Upper left</div>
<svg class="a" style="left:637px;top:478px" width="18" height="18" viewBox="637 478 18 18"><rect x="638.5" y="479.8" width="14.6" height="14.8" fill="#fff" stroke="#8a8a8e" stroke-width="1"/><rect x="647.4" y="488.4" width="3.6" height="3.6" fill="#18a888"/><rect x="644" y="486" width="1.2" height="1.2" fill="#777"/></svg>
<div class="t" style="left:518px;top:506px;letter-spacing:0.081px;">Orientation:</div>
<div class="cmb" style="left:625px;top:504px;width:379px;height:21px;padding-left:12px;letter-spacing:0.098px">Horizontal</div>
<div class="chk" style="left:519px;top:532px"></div>
<div class="t" style="left:538px;top:529px;letter-spacing:-0.203px;">Show frame</div>
<div class="a " style="left:1015px;top:4px;width:900px;height:593px;border:1px solid #d3d3d3"></div>
<div class="a " style="left:1020px;top:10px;width:61px;height:24px;border:1px solid #d3d3d3;border-bottom:none;background:#f9fafe"></div>
<div class="a " style="left:1016px;top:33px;width:5px;height:1px;background:#d3d3d3"></div>
<div class="a " style="left:1080px;top:33px;width:830px;height:1px;background:#d3d3d3"></div>
<div class="dc" style="left:1025px;top:15px;color:#2b579a">Graphics</div>
<div class="a " style="left:1089px;top:10px;width:141px;height:23px;background:#e8e8ea"></div>
<div class="dc" style="left:1093px;top:14px;">Convergence Plot 1</div>
<div class="d" style="left:1211px;top:11px;color:#b4bccb;font-size:17px;line-height:20px">×</div>
<svg class="a" style="left:1877.8px;top:20.5px" width="9" height="6" viewBox="0 0 9 6"><path d="M0 0H8.4L4.2 4.8Z" fill="#4c4c4c"/></svg>
<svg class="a" style="left:1893px;top:18.9px" width="8" height="11" viewBox="0 0 8 11"><path d="M1 0H6.1V5.7H7.1V7H4V10.3H3.1V7H0V5.7H1Z" fill="#4c4c4c"/></svg>
<svg class="a" style="left:1016px;top:36px" width="886" height="26" viewBox="1016 36 886 26"><circle cx="1029.7" cy="47.7" r="4.9" fill="#fff" fill-opacity="0.6" stroke="#2f8ad4" stroke-width="1.4"/><path d="M1033.3 51.300000000000004L1036.7 54.6" stroke="#2f8ad4" stroke-width="2.1" stroke-linecap="round"/><path d="M1027.2 47.7h5M1029.7 45.2v5" stroke="#2f8ad4" stroke-width="1.1"/><circle cx="1052.6" cy="47.7" r="4.9" fill="#fff" fill-opacity="0.6" stroke="#2f8ad4" stroke-width="1.4"/><path d="M1056.1999999999998 51.300000000000004L1059.8 54.6" stroke="#2f8ad4" stroke-width="2.1" stroke-linecap="round"/><path d="M1050.1 47.7h5" stroke="#2f8ad4" stroke-width="1.1"/><rect x="1069.6" y="47.9" width="7.6" height="6.4" fill="none" stroke="#2f8ad4" stroke-width="1.2" stroke-dasharray="2.2 1.4"/><circle cx="1077.3" cy="47.4" r="4.9" fill="#fff" fill-opacity="0.6" stroke="#2f8ad4" stroke-width="1.4"/><path d="M1080.8999999999999 51.0L1084.4 54.6" stroke="#2f8ad4" stroke-width="2.1" stroke-linecap="round"/><path d="M1074.8 47.4h5M1077.3 44.9v5" stroke="#2f8ad4" stroke-width="1.1"/><path d="M1090.9 47H1098.1000000000001L1094.5 51.2Z" fill="#111"/><rect x="1110.5" y="41.7" width="14" height="13.8" fill="#fff" stroke="#6a6a6e" stroke-width="1.1"/><path d="M1114.9 44.8L1117.5 42L1120.1 44.8ZM1114.9 52.4L1117.5 55.2L1120.1 52.4ZM1113.8 46.2L1111 48.6L1113.8 51ZM1121.2 46.2L1124 48.6L1121.2 51Z" fill="#2f8ad4"/><path d="M1115 48.6h5M1117.5 46.1v5" stroke="#6a6a6e" stroke-width="1"/><path d="M1133.5 41V57" stroke="#c9c9cd" stroke-width="1"/><path d="M1147.4 54.6V42.6" stroke="#2f8ad4" stroke-width="1.1"/><path d="M1145.9 43.8L1147.4 41.8L1148.9 43.8" fill="none" stroke="#2f8ad4" stroke-width="1"/><path d="M1147.4 54.6L1141.6 48.8" stroke="#3aa655" stroke-width="1.1"/><path d="M1141.2 50.8V48.4H1143.6" fill="none" stroke="#3aa655" stroke-width="1"/><path d="M1147.4 54.6L1156.6 48.6" stroke="#dc2f5c" stroke-width="1.1"/><path d="M1154.2 48.1H1157L1156 50.7" fill="none" stroke="#dc2f5c" stroke-width="1"/><path d="M1162.9 47H1170.1000000000001L1166.5 51.2Z" fill="#111"/><path d="M1184.3 54.5V42.6" stroke="#3aa655" stroke-width="1.1"/><path d="M1182.8 43.8L1184.3 41.8L1185.8 43.8" fill="none" stroke="#3aa655" stroke-width="1"/><path d="M1184.8 54.5H1196.3" stroke="#dc2f5c" stroke-width="1.1"/><path d="M1195.3 53L1197.3 54.5L1195.3 56" fill="none" stroke="#dc2f5c" stroke-width="1"/><text x="1186.7" y="49.8" font-family="DejaVu Sans,sans-serif" font-size="9.2" fill="#8c8c94">xy</text><path d="M1207.3 54.5V42.6" stroke="#2f8ad4" stroke-width="1.1"/><path d="M1205.8 43.8L1207.3 41.8L1208.8 43.8" fill="none" stroke="#2f8ad4" stroke-width="1"/><path d="M1207.8 54.5H1219.3" stroke="#3aa655" stroke-width="1.1"/><path d="M1218.3 53L1220.3 54.5L1218.3 56" fill="none" stroke="#3aa655" stroke-width="1"/><text x="1209.7" y="49.8" font-family="DejaVu Sans,sans-serif" font-size="9.2" fill="#8c8c94">yz</text><path d="M1230.4 54.5V42.6" stroke="#2f8ad4" stroke-width="1.1"/><path d="M1228.9 43.8L1230.4 41.8L1231.9 43.8" fill="none" stroke="#2f8ad4" stroke-width="1"/><path d="M1230.9 54.5H1242.4" stroke="#dc2f5c" stroke-width="1.1"/><path d="M1241.4 53L1243.4 54.5L1241.4 56" fill="none" stroke="#dc2f5c" stroke-width="1"/><text x="1232.8000000000002" y="49.8" font-family="DejaVu Sans,sans-serif" font-size="9.2" fill="#8c8c94">xz</text><path d="M1252 44.6Q1252 43.3 1253.3 43.3H1256.6Q1257.9 43.3 1257.9 44.6V54.8H1252Z" fill="#2f8ad4"/><path d="M1257.9 48.2H1260L1263.4 45.4H1265.6V53.6H1263.4L1260 51.2H1257.9Z" fill="#c8ccd6" stroke="#2f8ad4" stroke-width="1"/><path d="M1263.6 45.4V53.6" stroke="#2f8ad4" stroke-width="0.9"/><path d="M1274.4 41V57" stroke="#c9c9cd" stroke-width="1"/><path d="M1291 44.7A5.5 5.5 0 1 0 1295.2 48.4" fill="none" stroke="#2f8ad4" stroke-width="1.3"/><path d="M1291.5 41.8L1296.3 45.2L1291.5 48.4Z" fill="#2f8ad4"/><path d="M1302.8 47H1310.0L1306.3999999999999 51.2Z" fill="#111"/><path d="M1322.5 41V57" stroke="#c9c9cd" stroke-width="1"/><rect x="1339.8" y="46.4" width="4" height="7.6" fill="#dedee2"/><path d="M1336.6 41.2L1341.6 47V56.6L1336.6 50.8Z" fill="#cfe6fa" fill-opacity="0.5" stroke="#2f8ad4" stroke-width="0.9"/><path d="M1334.6 46H1344.2V54.4H1334.6Z" fill="none" stroke="#6c6c70" stroke-width="1.1"/><path d="M1330.6 42.4H1340.4L1344.2 46M1330.6 42.4L1334.6 46M1330.6 42.4V51L1334.6 54.4M1330.6 51H1340.4V42.4M1340.4 51L1344.2 54.4" fill="none" stroke="#6c6c70" stroke-width="1"/><path d="M1350.9 47H1358.1000000000001L1354.5 51.2Z" fill="#111"/><path d="M1370.3 41V57" stroke="#c9c9cd" stroke-width="1"/><rect x="1376.6" y="39.5" width="36.8" height="18.8" rx="2.6" fill="#a6d4f8" stroke="#2e96f0" stroke-width="1.2"/><path d="M1395.5 41V57" stroke="#2e96f0" stroke-width="1.1"/><path d="M1380 47.2H1383L1388.8 44V54L1383 51H1380Z" fill="#2f8ad4"/><path d="M1388.9 46A3 3 0 0 1 1388.9 52Z" fill="#fff"/><path d="M1400 47H1407.2L1403.6 51.2Z" fill="#111"/><path d="M1420.4 43.8H1430.6L1433.4 46.4V54.4H1423.4L1420.4 51.8Z" fill="#dbe5f3" stroke="#2f8ad4" stroke-width="1"/><path d="M1420.4 43.8L1423.4 46.4H1433.4M1423.4 46.4V54.4" fill="none" stroke="#2f8ad4" stroke-width="0.9"/><rect x="1424.6" y="47.6" width="7.6" height="5.6" fill="#c2d2ea"/><path d="M1440.8 47H1448.0L1444.3999999999999 51.2Z" fill="#111"/><rect x="1460.6" y="42.8" width="14.6" height="12.6" fill="#fff" stroke="#77777b" stroke-width="1.2"/><path d="M1467.6 52.8V45.6" stroke="#2f8ad4" stroke-width="1.1"/><path d="M1466.3 46.6L1467.6 44.8L1468.9 46.6" fill="none" stroke="#2f8ad4" stroke-width="0.9"/><path d="M1467.6 52.8L1464 49.2" stroke="#3aa655" stroke-width="1.1"/><rect x="1463" y="48.2" width="1.6" height="1.6" fill="#3aa655"/><path d="M1467.6 52.8L1472 49.2" stroke="#dc2f5c" stroke-width="1.1"/><rect x="1471.4" y="48.2" width="1.6" height="1.6" fill="#dc2f5c"/><rect x="1483.6" y="42.8" width="14.8" height="12.6" fill="#fff" stroke="#77777b" stroke-width="1.2"/><rect x="1486.2" y="44.1" width="9.7" height="9.9" fill="#2f8ad4"/><rect x="1487.2" y="45.2" width="1.8" height="1.8" fill="#fff"/><rect x="1487.2" y="48.2" width="1.8" height="1.8" fill="#fff"/><rect x="1487.2" y="51.3" width="1.8" height="1.8" fill="#fff"/><rect x="1490.2" y="45.2" width="1.8" height="1.8" fill="#fff"/><rect x="1490.2" y="48.2" width="1.8" height="1.8" fill="#fff"/><rect x="1490.2" y="51.3" width="1.8" height="1.8" fill="#fff"/><rect x="1493.2" y="45.2" width="1.8" height="1.8" fill="#fff"/><rect x="1493.2" y="48.2" width="1.8" height="1.8" fill="#fff"/><rect x="1493.2" y="51.3" width="1.8" height="1.8" fill="#fff"/><rect x="1504.6" y="39.5" width="19" height="18.8" rx="2.6" fill="#a6d4f8" stroke="#2e96f0" stroke-width="1.2"/><rect x="1506.9" y="42.8" width="14.6" height="12.6" fill="none" stroke="#77777b" stroke-width="1.2"/><defs><linearGradient id="lg1" x1="0" y1="0" x2="0" y2="1"><stop offset="0" stop-color="#4a6a9a"/><stop offset="0.35" stop-color="#7a8aa0"/><stop offset="0.6" stop-color="#f0a020"/><stop offset="1" stop-color="#e02050"/></linearGradient></defs><rect x="1516.1" y="44.1" width="2.7" height="9.9" fill="url(#lg1)"/><circle cx="1536.9" cy="49.1" r="6.9" fill="#2f8ad4"/><circle cx="1536.9" cy="49.1" r="2.7" fill="#f9fafe"/><path d="M1537.3 51.3L1544.3 50.4" stroke="#f9fafe" stroke-width="1.1"/><path d="M1535.2 50.6L1539.5 56.1" stroke="#f9fafe" stroke-width="1.1"/><path d="M1534.8 48.4L1532.1 54.8" stroke="#f9fafe" stroke-width="1.1"/><path d="M1536.5 46.9L1529.5 47.8" stroke="#f9fafe" stroke-width="1.1"/><path d="M1538.6 47.6L1534.3 42.1" stroke="#f9fafe" stroke-width="1.1"/><path d="M1539.0 49.8L1541.7 43.4" stroke="#f9fafe" stroke-width="1.1"/><path d="M1550.8 47H1558.0L1554.3999999999999 51.2Z" fill="#111"/><path d="M1570.1 45.4H1574.2L1575 43H1582.4L1583.2 45.4H1586V54.8H1570.1Z" fill="#2f8ad4"/><circle cx="1578.3" cy="49.6" r="3.4" fill="#2f8ad4" stroke="#fff" stroke-width="1.2"/><rect x="1571.4" y="46.4" width="1.5" height="1.4" fill="#fff"/><rect x="1596.6" y="41.5" width="8.8" height="5.4" fill="#fff" stroke="#2f8ad4" stroke-width="1.1"/><rect x="1594.4" y="46.6" width="13.2" height="7.6" rx="1.6" fill="#c6d6ea" stroke="#2f8ad4" stroke-width="1.1"/><rect x="1596.6" y="51.6" width="8.8" height="5" fill="#fff" stroke="#2f8ad4" stroke-width="1.1"/><path d="M1603.4 48.4h1.8" stroke="#2f8ad4" stroke-width="0.9"/></svg>
<div class="a " style="left:1016px;top:62px;width:886px;height:534px;background:linear-gradient(#fafbff,#e6f1fd)"></div>
<div class="d" style="left:1032px;top:76px;font-size:12.3px">Eigenfrequency=3.3806E6 Hz</div>
<div class="d" style="left:1351px;top:76px;font-size:12.08px">Line: Displacement magnitude (µm)</div>
<div class="d" style="left:1406.5px;top:202px;font-size:12.2px">max: 2.55794E-4</div>
<div class="d" style="left:1415.5px;top:583px;font-size:12.2px">min: 0.00000</div>
<svg class="a" style="left:1874px;top:64px" width="28" height="26" viewBox="1874 64 28 26"><defs><linearGradient id="cg" x1="0" y1="0" x2="1" y2="0.3"><stop offset="0" stop-color="#f0e040"/><stop offset="0.55" stop-color="#e8e860"/><stop offset="1" stop-color="#40c8e8"/></linearGradient></defs><path d="M1877.4 71.6L1894.8 67.2L1899 82.6L1882.4 87Z" fill="#f4f4f6" stroke="#e2e2e6" stroke-width="0.6"/><rect x="1882.2" y="71.2" width="14" height="10.4" rx="2.4" fill="#1c3cc0"/><path d="M1885 72.6H1894L1894.6 77L1885 80.4Z" fill="url(#cg)"/><path d="M1890 76.4L1895 74.4V79L1886 80.4Z" fill="#1c5ad0" opacity="0.55"/></svg>
<svg class="a" style="left:1016px;top:62px" width="886" height="534" viewBox="1016 62 886 534"><defs><linearGradient id="gl" gradientUnits="userSpaceOnUse" x1="0" y1="109.0" x2="0" y2="580.0"><stop offset="0.0000" stop-color="#1e1e8c"/><stop offset="0.0127" stop-color="#21229b"/><stop offset="0.0255" stop-color="#2426ac"/><stop offset="0.0382" stop-color="#2b31cc"/><stop offset="0.0510" stop-color="#314ceb"/><stop offset="0.0637" stop-color="#3686f3"/><stop offset="0.0764" stop-color="#38c7ed"/><stop offset="0.0892" stop-color="#4decc6"/><stop offset="0.1019" stop-color="#87f77a"/><stop offset="0.1146" stop-color="#d6ed29"/><stop offset="0.1274" stop-color="#f0af10"/><stop offset="0.1401" stop-color="#eb5210"/><stop offset="0.1529" stop-color="#d92409"/><stop offset="0.1656" stop-color="#af0d06"/><stop offset="0.1783" stop-color="#9f0908"/><stop offset="0.1911" stop-color="#9e0908"/><stop offset="0.2038" stop-color="#bf1005"/><stop offset="0.2166" stop-color="#d71f07"/><stop offset="0.2293" stop-color="#e83e10"/><stop offset="0.2420" stop-color="#f08b10"/><stop offset="0.2548" stop-color="#f0cd10"/><stop offset="0.2675" stop-color="#b6f047"/><stop offset="0.2803" stop-color="#5bf2b0"/><stop offset="0.2930" stop-color="#38d4eb"/><stop offset="0.3057" stop-color="#367ef2"/><stop offset="0.3185" stop-color="#314bea"/><stop offset="0.3312" stop-color="#314bea"/><stop offset="0.3439" stop-color="#314bea"/><stop offset="0.3567" stop-color="#314bea"/><stop offset="0.3694" stop-color="#3683f3"/><stop offset="0.3822" stop-color="#38bdef"/><stop offset="0.3949" stop-color="#42e8d8"/><stop offset="0.4076" stop-color="#61f4a7"/><stop offset="0.4204" stop-color="#97f668"/><stop offset="0.4331" stop-color="#cfee30"/><stop offset="0.4459" stop-color="#e8df18"/><stop offset="0.4586" stop-color="#f0ce10"/><stop offset="0.4713" stop-color="#f0c110"/><stop offset="0.4841" stop-color="#f0d010"/><stop offset="0.4968" stop-color="#e8dd18"/><stop offset="0.5096" stop-color="#deec22"/><stop offset="0.5223" stop-color="#b4f048"/><stop offset="0.5350" stop-color="#82f780"/><stop offset="0.5478" stop-color="#52efbe"/><stop offset="0.5605" stop-color="#38cfeb"/><stop offset="0.5732" stop-color="#378df3"/><stop offset="0.5860" stop-color="#314bea"/><stop offset="0.5987" stop-color="#314bea"/><stop offset="0.6115" stop-color="#314bea"/><stop offset="0.6242" stop-color="#314bea"/><stop offset="0.6369" stop-color="#314bea"/><stop offset="0.6497" stop-color="#378ff3"/><stop offset="0.6624" stop-color="#38e4e8"/><stop offset="0.6752" stop-color="#71f595"/><stop offset="0.6879" stop-color="#d0ed2e"/><stop offset="0.7006" stop-color="#edd513"/><stop offset="0.7134" stop-color="#f0ab10"/><stop offset="0.7261" stop-color="#f07610"/><stop offset="0.7389" stop-color="#eb5010"/><stop offset="0.7516" stop-color="#ea4a10"/><stop offset="0.7643" stop-color="#e94510"/><stop offset="0.7771" stop-color="#ed6110"/><stop offset="0.7898" stop-color="#f07f10"/><stop offset="0.8025" stop-color="#f09d10"/><stop offset="0.8153" stop-color="#f0b510"/><stop offset="0.8280" stop-color="#e8dd18"/><stop offset="0.8408" stop-color="#c6ee38"/><stop offset="0.8535" stop-color="#98f667"/><stop offset="0.8662" stop-color="#6bf59b"/><stop offset="0.8790" stop-color="#50edc2"/><stop offset="0.8917" stop-color="#38e4e7"/><stop offset="0.9045" stop-color="#38baef"/><stop offset="0.9172" stop-color="#378ff3"/><stop offset="0.9299" stop-color="#3465f1"/><stop offset="0.9427" stop-color="#3047e5"/><stop offset="0.9554" stop-color="#2d39d5"/><stop offset="0.9682" stop-color="#2a2ec8"/><stop offset="0.9809" stop-color="#2629b6"/><stop offset="0.9936" stop-color="#2325a6"/></linearGradient><linearGradient id="gr" gradientUnits="userSpaceOnUse" x1="0" y1="110.2" x2="0" y2="578.0"><stop offset="0.0000" stop-color="#202094"/><stop offset="0.0128" stop-color="#2325a6"/><stop offset="0.0257" stop-color="#272aba"/><stop offset="0.0385" stop-color="#2d3bd8"/><stop offset="0.0513" stop-color="#335cf1"/><stop offset="0.0641" stop-color="#389ff4"/><stop offset="0.0770" stop-color="#38e4e8"/><stop offset="0.0898" stop-color="#61f4a6"/><stop offset="0.1026" stop-color="#acf251"/><stop offset="0.1154" stop-color="#eadb16"/><stop offset="0.1283" stop-color="#f08c10"/><stop offset="0.1411" stop-color="#e3330d"/><stop offset="0.1539" stop-color="#b50e06"/><stop offset="0.1667" stop-color="#6e0606"/><stop offset="0.1796" stop-color="#6e0606"/><stop offset="0.1924" stop-color="#6e0606"/><stop offset="0.2052" stop-color="#840707"/><stop offset="0.2180" stop-color="#a30a07"/><stop offset="0.2309" stop-color="#d41a06"/><stop offset="0.2437" stop-color="#ed5e10"/><stop offset="0.2565" stop-color="#f0af10"/><stop offset="0.2693" stop-color="#c1ef3c"/><stop offset="0.2822" stop-color="#5cf2ae"/><stop offset="0.2950" stop-color="#38c9ec"/><stop offset="0.3078" stop-color="#3464f1"/><stop offset="0.3206" stop-color="#314bea"/><stop offset="0.3335" stop-color="#314bea"/><stop offset="0.3463" stop-color="#314bea"/><stop offset="0.3591" stop-color="#3357f0"/><stop offset="0.3720" stop-color="#38acf1"/><stop offset="0.3848" stop-color="#46ead1"/><stop offset="0.3976" stop-color="#85f77c"/><stop offset="0.4104" stop-color="#bdef40"/><stop offset="0.4233" stop-color="#e7df19"/><stop offset="0.4361" stop-color="#f0ab10"/><stop offset="0.4489" stop-color="#f08f10"/><stop offset="0.4617" stop-color="#f07a10"/><stop offset="0.4746" stop-color="#f07f10"/><stop offset="0.4874" stop-color="#f09210"/><stop offset="0.5002" stop-color="#f0a510"/><stop offset="0.5130" stop-color="#f0bd10"/><stop offset="0.5259" stop-color="#e4e51c"/><stop offset="0.5387" stop-color="#c1ef3d"/><stop offset="0.5515" stop-color="#7df686"/><stop offset="0.5643" stop-color="#4aebcb"/><stop offset="0.5772" stop-color="#38c5ed"/><stop offset="0.5900" stop-color="#3681f3"/><stop offset="0.6028" stop-color="#314bea"/><stop offset="0.6156" stop-color="#314bea"/><stop offset="0.6285" stop-color="#314bea"/><stop offset="0.6413" stop-color="#314bea"/><stop offset="0.6541" stop-color="#314bea"/><stop offset="0.6670" stop-color="#378cf3"/><stop offset="0.6798" stop-color="#38dee9"/><stop offset="0.6926" stop-color="#5df3ad"/><stop offset="0.7054" stop-color="#8bf876"/><stop offset="0.7183" stop-color="#c0ef3d"/><stop offset="0.7311" stop-color="#e8de18"/><stop offset="0.7439" stop-color="#f0bf10"/><stop offset="0.7567" stop-color="#f0ae10"/><stop offset="0.7696" stop-color="#f0a110"/><stop offset="0.7824" stop-color="#f0b110"/><stop offset="0.7952" stop-color="#f0bf10"/><stop offset="0.8080" stop-color="#f0ce10"/><stop offset="0.8209" stop-color="#e9dd17"/><stop offset="0.8337" stop-color="#c7ee37"/><stop offset="0.8465" stop-color="#99f666"/><stop offset="0.8593" stop-color="#6cf59a"/><stop offset="0.8722" stop-color="#50eec1"/><stop offset="0.8850" stop-color="#3be5e4"/><stop offset="0.8978" stop-color="#38bcef"/><stop offset="0.9106" stop-color="#378ef3"/><stop offset="0.9235" stop-color="#3360f1"/><stop offset="0.9363" stop-color="#2f43e1"/><stop offset="0.9491" stop-color="#2a30ca"/><stop offset="0.9619" stop-color="#272ab8"/><stop offset="0.9748" stop-color="#2426a9"/><stop offset="0.9876" stop-color="#21229a"/></linearGradient><linearGradient id="cb" x1="0" y1="1" x2="0" y2="0"><stop offset="0.0000" stop-color="#1e1e8c"/><stop offset="0.0977" stop-color="#2a2ec8"/><stop offset="0.1955" stop-color="#3250f0"/><stop offset="0.2932" stop-color="#389cf4"/><stop offset="0.3909" stop-color="#38e4e8"/><stop offset="0.4887" stop-color="#60f4a8"/><stop offset="0.5473" stop-color="#90f870"/><stop offset="0.5864" stop-color="#b4f048"/><stop offset="0.6450" stop-color="#e0ec20"/><stop offset="0.6841" stop-color="#f0d010"/><stop offset="0.7428" stop-color="#f0a010"/><stop offset="0.7819" stop-color="#f07810"/><stop offset="0.8405" stop-color="#e83c10"/><stop offset="0.8991" stop-color="#d01404"/><stop offset="0.9578" stop-color="#980808"/><stop offset="1.0000" stop-color="#6e0606"/></linearGradient></defs><path d="M1403.4 109.0C1403.1 111.4 1402.5 119.4 1401.8 123.4C1401.1 127.4 1400.2 129.7 1399.4 132.9C1398.6 136.1 1397.8 139.2 1397.0 142.4C1396.2 145.6 1395.3 148.7 1394.5 151.9C1393.7 155.1 1393.0 157.6 1392.0 161.4C1391.0 165.2 1389.5 170.5 1388.6 175.0C1387.7 179.5 1386.9 184.6 1386.6 188.5C1386.2 192.4 1386.3 193.9 1386.5 198.4C1386.7 202.9 1387.2 210.1 1388.0 215.5C1388.8 220.9 1389.6 225.4 1391.1 231.1C1392.6 236.8 1394.7 243.4 1396.8 249.6C1398.9 255.8 1401.7 263.0 1403.6 268.1C1405.5 273.2 1406.7 274.9 1408.2 280.0C1409.7 285.1 1411.2 292.6 1412.4 298.5C1413.6 304.4 1414.8 310.3 1415.5 315.5C1416.2 320.7 1416.4 324.4 1416.4 329.8C1416.4 335.2 1416.0 342.5 1415.5 348.2C1415.0 353.9 1414.3 358.2 1413.1 363.9C1411.9 369.6 1409.8 376.6 1408.2 382.4C1406.6 388.2 1405.9 390.2 1403.2 398.5C1400.5 406.8 1394.2 423.0 1391.8 432.4C1389.4 441.8 1389.2 448.8 1388.6 455.0C1388.0 461.2 1388.1 462.9 1388.4 469.4C1388.7 475.9 1389.2 484.8 1390.3 494.0C1391.4 503.2 1393.3 514.5 1394.9 524.8C1396.5 535.1 1398.8 546.4 1400.1 555.6C1401.4 564.8 1402.2 575.9 1402.6 580.0" fill="none" stroke="url(#gl)" stroke-width="1.4"/><path d="M1411.2 110.2C1410.9 112.4 1410.2 119.6 1409.6 123.4C1409.0 127.2 1408.2 129.7 1407.4 132.9C1406.6 136.1 1405.8 139.2 1404.9 142.4C1404.0 145.6 1403.0 148.7 1402.2 151.9C1401.4 155.1 1400.9 157.6 1399.9 161.4C1399.0 165.2 1397.5 170.5 1396.5 175.0C1395.5 179.5 1394.4 184.6 1393.9 188.5C1393.4 192.4 1393.5 193.9 1393.7 198.4C1393.9 202.9 1394.3 210.1 1395.1 215.5C1395.9 220.9 1397.0 225.9 1398.5 231.1C1400.0 236.3 1401.8 241.2 1403.9 246.8C1406.0 252.4 1408.9 259.1 1411.0 264.6C1413.1 270.1 1414.9 274.8 1416.7 280.0C1418.5 285.2 1420.3 289.7 1421.7 295.6C1423.1 301.5 1424.5 310.1 1425.2 315.5C1425.9 320.9 1426.0 322.9 1425.9 328.3C1425.9 333.8 1425.4 342.3 1424.9 348.2C1424.4 354.1 1423.8 358.2 1422.7 363.9C1421.6 369.6 1419.7 376.4 1418.1 382.4C1416.5 388.4 1415.7 391.7 1413.1 400.0C1410.5 408.3 1405.0 423.2 1402.6 432.4C1400.2 441.6 1399.6 448.8 1398.8 455.0C1398.0 461.2 1397.9 462.9 1398.0 469.4C1398.1 475.9 1398.2 484.8 1399.2 494.0C1400.2 503.2 1402.1 514.5 1403.8 524.8C1405.5 535.1 1408.1 546.7 1409.4 555.6C1410.8 564.5 1411.5 574.3 1411.9 578.0" fill="none" stroke="url(#gr)" stroke-width="1.4"/><path d="M1403.5 104V292M1411.5 104V292" stroke="#1a1a1a" stroke-width="1" fill="none"/><path d="M1402.9 292V583M1412.4 292V583" stroke="#222" stroke-width="1.25" fill="none"/><path d="M1403.5 104H1411.9" stroke="#8a8ac8" stroke-width="1.4"/><path d="M1403.5 107.2H1411.9" stroke="#20208c" stroke-width="1.1"/><path d="M1403.9 104V110M1411.4 104V110" stroke="#20208c" stroke-width="0.9"/><path d="M1402.6 580.2H1412.6" stroke="#20208c" stroke-width="1.1"/><path d="M1403 583.9H1412.4" stroke="#7a7ac0" stroke-width="1.4"/><circle cx="1393.8" cy="199.2" r="1.9" fill="#111"/><rect x="1401.2" y="578.6" width="3.4" height="3.2" fill="#111"/><path d="M1335.5 200.2H1380" stroke="#ff5a12" stroke-width="2.8" stroke-linecap="round" fill="none"/><path d="M1373.5 194.5Q1379.2 195.8 1381 200.2Q1381.5 204.1 1377 208" stroke="#ff5a12" stroke-width="2.8" stroke-linecap="round" stroke-linejoin="round" fill="none"/><path d="M1344.5 268H1401.5" stroke="#1648e6" stroke-width="3.2" stroke-linecap="round" fill="none"/><path d="M1390 259.6Q1398.2 262.3 1402.5 268Q1401.8 270.3 1396 272.6" stroke="#1648e6" stroke-width="3.2" stroke-linecap="round" stroke-linejoin="round" fill="none"/><path d="M1344.5 331.2H1393.5" stroke="#ff5a12" stroke-width="2.8" stroke-linecap="round" fill="none"/><path d="M1386 319.4Q1392.2 323.8 1394.5 331.2Q1392.8 334.3 1386.2 337.4" stroke="#ff5a12" stroke-width="2.8" stroke-linecap="round" stroke-linejoin="round" fill="none"/><path d="M1343.5 398.6H1402" stroke="#1648e6" stroke-width="3.2" stroke-linecap="round" fill="none"/><path d="M1390.2 388Q1398.6 391.8 1403 398.6Q1400.3 402.8 1392.6 407" stroke="#1648e6" stroke-width="3.2" stroke-linecap="round" stroke-linejoin="round" fill="none"/><path d="M1334.5 493.2H1379.2" stroke="#ff5a12" stroke-width="2.8" stroke-linecap="round" fill="none"/><path d="M1372.4 485.6Q1378.3 487.9 1380.2 493.2Q1375.4 496.9 1365.6 500.6" stroke="#ff5a12" stroke-width="2.8" stroke-linecap="round" stroke-linejoin="round" fill="none"/><rect x="1810.5" y="147.5" width="16" height="395" fill="url(#cb)" stroke="#5a5a5e" stroke-width="1"/><text x="1835.5" y="546.2" font-family="DejaVu Sans,sans-serif" font-size="12.2" fill="#111">0</text><path d="M1811 464.6h2.5M1826 464.6h-2.5" stroke="#222" stroke-width="1"/><text x="1835.5" y="469.1" font-family="DejaVu Sans,sans-serif" font-size="12.2" fill="#111">5</text><path d="M1811 387.5h2.5M1826 387.5h-2.5" stroke="#222" stroke-width="1"/><text x="1835.5" y="392.0" font-family="DejaVu Sans,sans-serif" font-size="12.2" fill="#111">10</text><path d="M1811 310.4h2.5M1826 310.4h-2.5" stroke="#222" stroke-width="1"/><text x="1835.5" y="314.9" font-family="DejaVu Sans,sans-serif" font-size="12.2" fill="#111">15</text><path d="M1811 233.3h2.5M1826 233.3h-2.5" stroke="#222" stroke-width="1"/><text x="1835.5" y="237.8" font-family="DejaVu Sans,sans-serif" font-size="12.2" fill="#111">20</text><path d="M1811 156.2h2.5M1826 156.2h-2.5" stroke="#222" stroke-width="1"/><text x="1835.5" y="160.7" font-family="DejaVu Sans,sans-serif" font-size="12.2" fill="#111">25</text><path d="M1797.8 120.8H1809.4L1803.6 111Z" fill="#111"/><path d="M1797.5 555.2H1809L1803.2 565Z" fill="#111"/><text x="1814.3" y="122.3" font-family="DejaVu Sans,sans-serif" fill="#111" font-size="12.2">2.56×10</text><text x="1868.6" y="116.3" font-family="DejaVu Sans,sans-serif" fill="#111" font-size="9.4">-4</text><text x="1826.8" y="138.7" font-family="DejaVu Sans,sans-serif" fill="#111" font-size="12.2">×10</text><text x="1852.8" y="132.8" font-family="DejaVu Sans,sans-serif" fill="#111" font-size="9.4">-5</text><text x="1814.2" y="564.2" font-family="DejaVu Sans,sans-serif" fill="#111" font-size="12.2">0</text></svg>
<div class="a " style="left:1015px;top:602px;width:900px;height:260px;border:1px solid #d3d3d3"></div>
<div class="a " style="left:1016px;top:631px;width:900px;height:1px;background:#d3d3d3"></div>
<div class="a " style="left:1020px;top:608px;width:87px;height:23px;background:#e8e8ea"></div>
<div class="dc" style="left:1024px;top:612px;">Messages</div>
<div class="d" style="left:1088px;top:609px;color:#b4bccb;font-size:17px;line-height:20px">×</div>
<div class="a " style="left:1115px;top:608px;width:61px;height:23px;background:#e8e8ea"></div>
<div class="dc" style="left:1119px;top:612px;">Progress</div>
<div class="a " style="left:1184px;top:608px;width:30px;height:23px;background:#e8e8ea"></div>
<div class="dc" style="left:1187px;top:612px;">Log</div>
<div class="a " style="left:1222px;top:608px;width:222px;height:24px;border:1px solid #d3d3d3;border-bottom:none;background:#f9fafe"></div>
<div class="dc" style="left:1226px;top:612px;color:#2b579a">Maximum and Minimum Values 1</div>
<div class="d" style="left:1425px;top:609px;color:#b4bccb;font-size:17px;line-height:20px">×</div>
<svg class="a" style="left:1877.8px;top:618.7px" width="9" height="6" viewBox="0 0 9 6"><path d="M0 0H8.4L4.2 4.8Z" fill="#4c4c4c"/></svg>
<svg class="a" style="left:1892.9px;top:616.7px" width="8" height="11" viewBox="0 0 8 11"><path d="M1 0H6.1V5.7H7.1V7H4V10.3H3.1V7H0V5.7H1Z" fill="#4c4c4c"/></svg>
<svg class="a" style="left:1016px;top:634px" width="886" height="26" viewBox="1016 634 886 26"><rect x="1026.8" y="640" width="10.4" height="13" rx="1" fill="#fff" stroke="#77777b" stroke-width="1.2"/><path d="M1026.8 646.8H1037.2" stroke="#77777b" stroke-width="1.3"/><path d="M1027 641.1H1037M1027 647.9H1037" stroke="#a8a8ac" stroke-width="0.9"/><path d="M1029.4 643.6H1034.8M1029.4 650.5H1034.8" stroke="#2f8ad4" stroke-width="1"/><path d="M1047.4 639.4V654.6" stroke="#c9c9cd" stroke-width="1"/><text x="1051.8" y="645.7" font-family="DejaVu Sans Condensed,DejaVu Sans,sans-serif" font-size="9" fill="#2f8ad4" stroke="#2f8ad4" stroke-width="0.25" textLength="16.2" lengthAdjust="spacingAndGlyphs">8.85</text><text x="1051.8" y="653.6" font-family="DejaVu Sans Condensed,DejaVu Sans,sans-serif" font-size="9" fill="#2f8ad4" stroke="#2f8ad4" stroke-width="0.25" textLength="15.4" lengthAdjust="spacingAndGlyphs">e-12</text><rect x="1070.7" y="637.6" width="18.6" height="18.8" rx="2.6" fill="#a6d4f8" stroke="#2e96f0" stroke-width="1.2"/><text x="1072" y="648.8" font-family="DejaVu Sans Condensed,DejaVu Sans,sans-serif" font-size="6.2" font-weight="bold" fill="#2f8ad4" textLength="16" lengthAdjust="spacingAndGlyphs">AUTO</text><text x="1093.8" y="645.7" font-family="DejaVu Sans Condensed,DejaVu Sans,sans-serif" font-size="9" fill="#2f8ad4" stroke="#2f8ad4" stroke-width="0.25" textLength="11.4" lengthAdjust="spacingAndGlyphs">8.5</text><text x="1093.8" y="653.6" font-family="DejaVu Sans Condensed,DejaVu Sans,sans-serif" font-size="9" fill="#2f8ad4" stroke="#2f8ad4" stroke-width="0.25" textLength="10.4" lengthAdjust="spacingAndGlyphs">e-1</text><text x="1112.7" y="645.7" font-family="DejaVu Sans Condensed,DejaVu Sans,sans-serif" font-size="9" fill="#2f8ad4" stroke="#2f8ad4" stroke-width="0.25" textLength="14.6" lengthAdjust="spacingAndGlyphs">850</text><text x="1112.7" y="653.6" font-family="DejaVu Sans Condensed,DejaVu Sans,sans-serif" font-size="9" fill="#2f8ad4" stroke="#2f8ad4" stroke-width="0.25" textLength="12.4" lengthAdjust="spacingAndGlyphs">e-3</text><text x="1131.8" y="649.7" font-family="DejaVu Sans Condensed,DejaVu Sans,sans-serif" font-size="9.2" fill="#2f8ad4" stroke="#2f8ad4" stroke-width="0.25" textLength="16.4" lengthAdjust="spacingAndGlyphs">0.85</text><path d="M1155.4 639.4V654.6" stroke="#c9c9cd" stroke-width="1"/><rect x="1158.6" y="637.6" width="18.8" height="18.8" rx="2.6" fill="#a6d4f8" stroke="#2e96f0" stroke-width="1.2"/><rect x="1160" y="642" width="16" height="8.8" fill="#3d6cb0"/><rect x="1160.90" y="643.10" width="2" height="1.5" fill="#fff"/><rect x="1160.90" y="645.60" width="2" height="1.5" fill="#fff"/><rect x="1160.90" y="648.10" width="2" height="1.5" fill="#fff"/><rect x="1163.95" y="643.10" width="2" height="1.5" fill="#fff"/><rect x="1163.95" y="645.60" width="2" height="1.5" fill="#fff"/><rect x="1163.95" y="648.10" width="2" height="1.5" fill="#fff"/><rect x="1167.00" y="643.10" width="2" height="1.5" fill="#fff"/><rect x="1167.00" y="645.60" width="2" height="1.5" fill="#fff"/><rect x="1167.00" y="648.10" width="2" height="1.5" fill="#fff"/><rect x="1170.05" y="643.10" width="2" height="1.5" fill="#fff"/><rect x="1170.05" y="645.60" width="2" height="1.5" fill="#fff"/><rect x="1170.05" y="648.10" width="2" height="1.5" fill="#fff"/><rect x="1173.10" y="643.10" width="2" height="1.5" fill="#fff"/><rect x="1173.10" y="645.60" width="2" height="1.5" fill="#fff"/><rect x="1173.10" y="648.10" width="2" height="1.5" fill="#fff"/><circle cx="1187.5" cy="646.4" r="7" fill="none" stroke="#3d6cb0" stroke-width="1.1"/><circle cx="1187.5" cy="646.4" r="5.2" fill="none" stroke="#3d6cb0" stroke-width="0.7"/><circle cx="1187.5" cy="646.4" r="3.4" fill="none" stroke="#3d6cb0" stroke-width="0.7"/><circle cx="1187.5" cy="646.4" r="1.7" fill="none" stroke="#3d6cb0" stroke-width="0.7"/><path d="M1187.5 646.4L1194.5 646.4M1187.5 646.4L1192.4 651.3M1187.5 646.4L1187.5 653.4M1187.5 646.4L1182.6 651.3M1187.5 646.4L1180.5 646.4M1187.5 646.4L1182.6 641.5M1187.5 646.4L1187.5 639.4M1187.5 646.4L1192.4 641.5" stroke="#3d6cb0" stroke-width="0.7"/><path d="M1180.5 646.4H1194.5M1187.5 639.4V653.4" stroke="#3d6cb0" stroke-width="1"/><path d="M1203.3 639.4V654.6" stroke="#c9c9cd" stroke-width="1"/><path d="M1211.5 639.4L1215.3 645.8" stroke="#6a6a6e" stroke-width="1.5" stroke-linecap="round"/><path d="M1214.6 645.2L1216.4 644.6C1218.4 648 1220.4 651.2 1222.2 653.4L1219.6 654.6L1217.8 653.6L1216.6 655.2L1214.6 654.4C1215.4 651 1215.2 648 1214.6 645.2Z" fill="#eaa646"/><path d="M1216.8 649L1217.8 653.4M1218.6 650L1220 653.8" stroke="#c98228" stroke-width="0.6"/><path d="M1229.9 640.7H1241.1" stroke="#2f8ad4" stroke-width="1.3"/><path d="M1234.3 639.6H1236.7" stroke="#2f8ad4" stroke-width="1.1"/><path d="M1231 642.2H1240L1239.6 654Q1239.5 654.9 1238.6 654.9H1232.4Q1231.5 654.9 1231.4 654Z" fill="#2f8ad4"/><path d="M1233.9 643.4V652.6M1237.1 643.4V652.6" stroke="#fff" stroke-width="1.2"/><path d="M1250.4 640.4V655.2H1263.4" fill="none" stroke="#77777b" stroke-width="1.1"/><path d="M1249.2 641.6L1250.4 639.8L1251.6 641.6M1262.4 654L1264 655.2L1262.4 656.4" fill="none" stroke="#77777b" stroke-width="0.8"/><rect x="1252.2" y="642.1" width="10.8" height="10.3" fill="#b350a6"/><rect x="1253.2" y="643" width="4" height="1.8" fill="#e3b7dd"/><rect x="1258.1" y="643" width="4" height="1.8" fill="#e3b7dd"/><rect x="1253.2" y="645.9" width="4" height="1.9" fill="#fff"/><rect x="1258.1" y="645.9" width="4" height="1.9" fill="#fff"/><rect x="1253.2" y="648.8" width="4" height="1.9" fill="#fff"/><rect x="1258.1" y="648.8" width="4" height="1.9" fill="#fff"/><rect x="1269" y="639" width="14.9" height="14.7" fill="#b350a6"/><path d="M1288.4 643.6C1289.4 639.6 1296.4 638.4 1300.6 640.6C1304.6 642.8 1304.6 649 1302 652.4C1300 655 1296.6 655 1295.4 652.4C1294.4 650 1293.6 648.2 1291.4 647.6C1289.4 647 1287.8 646 1288.4 643.6Z" fill="none" stroke="#b350a6" stroke-width="1"/><path d="M1291 643.8C1292 641.4 1297 640.8 1299.8 642.4C1302.6 644.2 1302.6 648.6 1300.6 651.2C1299.2 653 1297.4 652.8 1296.8 651C1296.2 649 1295.4 647 1293.4 646.2C1291.8 645.6 1290.6 645 1291 643.8Z" fill="none" stroke="#b350a6" stroke-width="0.9"/><path d="M1294.2 644.2C1295.4 643 1298 643 1299.4 644.4C1300.8 646 1300.4 648.6 1299.2 650C1298.4 650.8 1298 650 1297.8 648.8C1297.6 647 1296.6 645.8 1295 645.4Z" fill="none" stroke="#b350a6" stroke-width="0.8"/><path d="M1297.6 645.4C1298.6 646 1298.8 647.6 1298.4 648.4" fill="none" stroke="#b350a6" stroke-width="0.8"/><rect x="1308.5" y="639.7" width="9.8" height="10.6" fill="#fff" stroke="#77777b" stroke-width="1.1"/><path d="M1310.4 642.2H1314.6" stroke="#8c8c90" stroke-width="1.1"/><path d="M1310.4 645H1313M1310.4 647.6H1313" stroke="#9a9a9e" stroke-width="1"/><rect x="1313.8" y="643.8" width="9.4" height="10.4" fill="#fff" stroke="#2f8ad4" stroke-width="1.2"/><path d="M1315.8 646.2H1320" stroke="#2f8ad4" stroke-width="1.3"/><rect x="1315.9" y="648.6" width="5.4" height="3.6" fill="none" stroke="#2f8ad4" stroke-width="0.9"/><path d="M1318.6 648.6V652.2M1315.9 650.4H1321.3" stroke="#2f8ad4" stroke-width="0.8"/><path d="M1341.4 644.4V641.8H1328.8V652H1341.4" fill="none" stroke="#77777b" stroke-width="1.1"/><path d="M1328.8 643.6H1341.4" stroke="#77777b" stroke-width="0.9"/><path d="M1335 647.8H1341" stroke="#2f8ad4" stroke-width="1.7"/><path d="M1340.4 644.8L1344.2 647.8L1340.4 650.8Z" fill="#2f8ad4"/><rect x="1348.6" y="641" width="11.8" height="8.4" fill="#fff" stroke="#77777b" stroke-width="1.1"/><path d="M1350.6 643.2H1354.4" stroke="#8c8c90" stroke-width="1.1"/><rect x="1351.7" y="644.9" width="11.7" height="8.3" fill="#fff" stroke="#2f8ad4" stroke-width="1.2"/><path d="M1353.8 647H1358" stroke="#2f8ad4" stroke-width="1.3"/><rect x="1353.9" y="649.4" width="7.4" height="1.9" fill="none" stroke="#2f8ad4" stroke-width="0.8"/><path d="M1357.6 649.4V651.3" stroke="#2f8ad4" stroke-width="0.8"/><rect x="1368.9" y="640.3" width="13.1" height="12.5" fill="#b350a6"/><rect x="1370.00" y="641.30" width="2.9" height="1.8" fill="#fff"/><rect x="1370.00" y="644.25" width="2.9" height="1.8" fill="#ecd0e8"/><rect x="1370.00" y="647.20" width="2.9" height="1.8" fill="#fff"/><rect x="1370.00" y="650.15" width="2.9" height="1.8" fill="#fff"/><rect x="1374.05" y="641.30" width="2.9" height="1.8" fill="#fff"/><rect x="1374.05" y="644.25" width="2.9" height="1.8" fill="#fff"/><rect x="1374.05" y="647.20" width="2.9" height="1.8" fill="#ecd0e8"/><rect x="1374.05" y="650.15" width="2.9" height="1.8" fill="#fff"/><rect x="1378.10" y="641.30" width="2.9" height="1.8" fill="#ecd0e8"/><rect x="1378.10" y="644.25" width="2.9" height="1.8" fill="#fff"/><rect x="1378.10" y="647.20" width="2.9" height="1.8" fill="#fff"/><rect x="1378.10" y="650.15" width="2.9" height="1.8" fill="#fff"/><path d="M1390.2 644.9H1397.2L1393.7 649.1Z" fill="#111"/></svg>
<div class="a " style="left:1025px;top:663px;width:870px;height:190px;background:#fefeff;border:1px solid #d3d3d3"></div>
<div class="a " style="left:1026px;top:664px;width:868px;height:25px;background:#efeff0"></div>
<div class="a " style="left:1026px;top:689px;width:868px;height:36px;background:#f9f9f9"></div>
<div class="a " style="left:1061px;top:664px;width:1px;height:62px;background:#bdbdc1"></div>
<div class="a " style="left:1097px;top:664px;width:1px;height:62px;background:#bdbdc1"></div>
<div class="a " style="left:1133px;top:664px;width:1px;height:62px;background:#bdbdc1"></div>
<div class="a " style="left:1306px;top:664px;width:1px;height:62px;background:#bdbdc1"></div>
<div class="a " style="left:1026px;top:707px;width:868px;height:1px;background:#a9a9ad"></div>
<div class="a " style="left:1026px;top:725px;width:868px;height:1px;background:#a9a9ad"></div>
<div class="t" style="left:1030px;top:671px;letter-spacing:-1.004px;">X</div>
<div class="t" style="left:1067px;top:671px;letter-spacing:-1.004px;">Y</div>
<div class="t" style="left:1103px;top:671px;letter-spacing:-0.330px;">Z</div>
<div class="t" style="left:1139px;top:671px;letter-spacing:-0.048px;">Displacement magnitude (µm)</div>
<div class="t" style="left:1027px;top:690px;letter-spacing:-0.617px;">0.0000</div>
<div class="t" style="left:1063px;top:690px;letter-spacing:-0.617px;">0.0000</div>
<div class="t" style="left:1099px;top:690px;letter-spacing:-0.617px;">0.0000</div>
<div class="t" style="left:1135px;top:690px;letter-spacing:-0.617px;">0.0000</div>
<div class="t" style="left:1027px;top:708px;letter-spacing:-0.617px;">4.5000</div>
<div class="t" style="left:1063px;top:708px;letter-spacing:-0.617px;">205.64</div>
<div class="t" style="left:1099px;top:708px;letter-spacing:-0.617px;">0.0000</div>
<div class="t" style="left:1135px;top:708px;letter-spacing:-0.597px;">2.5579E-4</div>
<div class="a " style="left:1250px;top:726px;width:64px;height:24px;background:#f7f8fc;border:1px solid #9a9a9e"></div>
<div class="t" style="left:1257px;top:729px;letter-spacing:-0.597px;color:#444">2.5579E-4</div>
</body></html>
